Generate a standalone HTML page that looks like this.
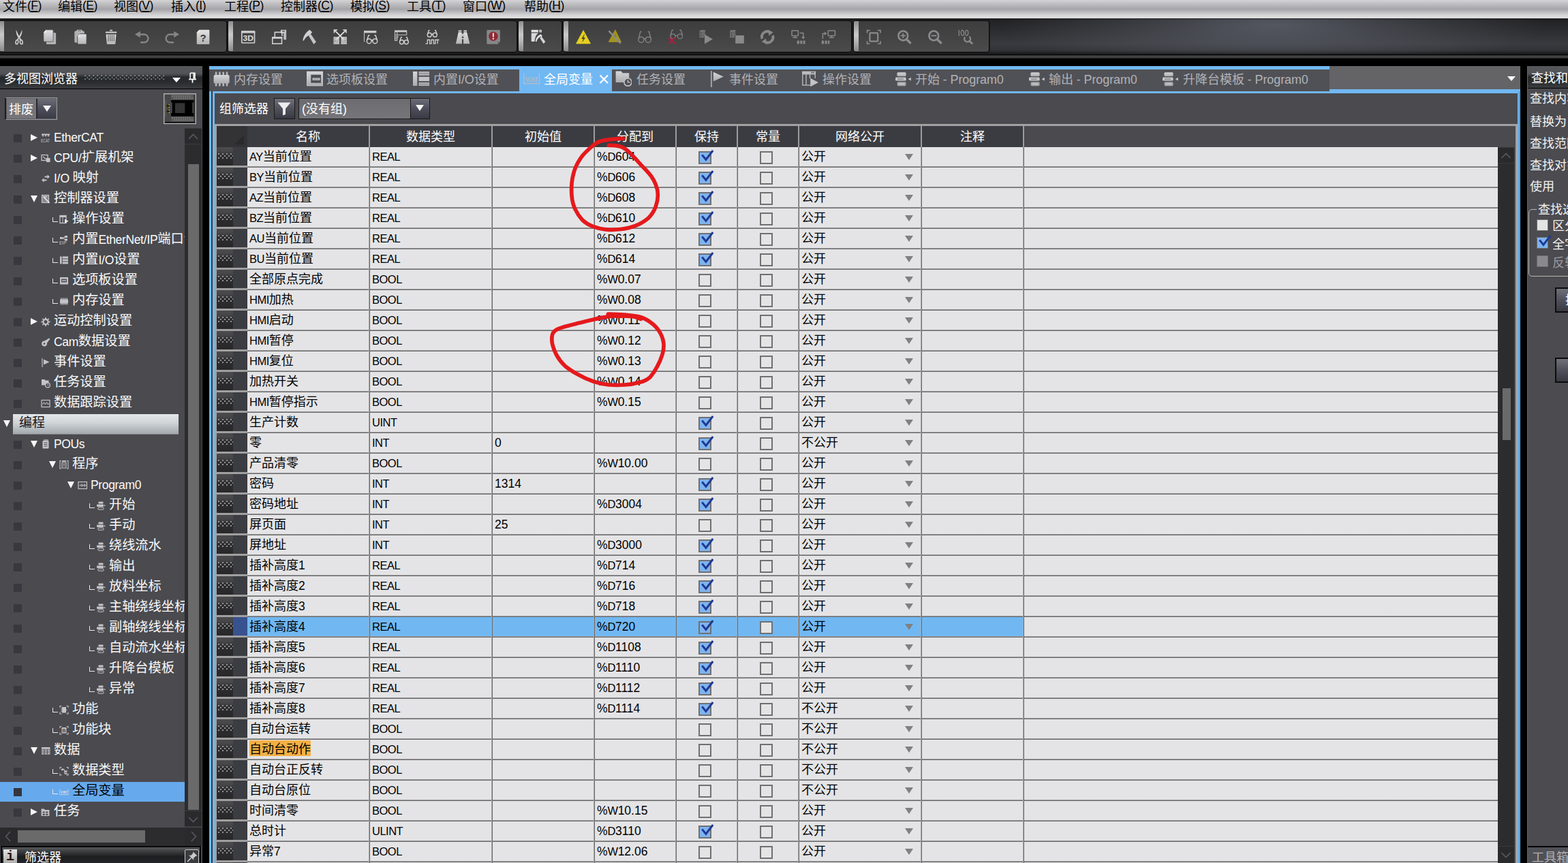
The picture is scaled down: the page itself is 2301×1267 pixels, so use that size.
<!DOCTYPE html><html lang="zh"><head><meta charset="utf-8"><title>Sysmac Studio</title><style>
*{box-sizing:border-box;margin:0;padding:0}
html,body{width:2301px;height:1267px;overflow:hidden;background:#000}
body{position:relative;font-family:"Liberation Sans","Noto Sans CJK SC",sans-serif;font-size:18px;color:#fff;white-space:nowrap}
div,span,svg{position:absolute}
span{position:static}
.l{font-size:16.5px;letter-spacing:-.5px}
.l2{font-size:18px;letter-spacing:-.1px}
.n{font-size:17.5px}
/* menu */
#menu{left:0;top:0;width:2301px;height:27px;background:linear-gradient(#d4d4d6 0,#bebec1 22%,#a5a5a9 50%,#c6c6c9 72%,#dededf 90%,#d8d8da 100%);color:#000;font-size:18px;overflow:hidden}
.mi{top:-3px;height:26px;line-height:26px}
.ml{font-size:17.5px;letter-spacing:-.5px;position:relative;top:-2px}
.ml u{text-decoration-thickness:1.5px;text-underline-offset:2px}
/* toolbar */
#tb{left:0;top:27px;width:2301px;height:54px;background:linear-gradient(#1c1c1e 0,#242426 10%,#2d2e31 38%,#393a3f 68%,#333438 86%,#1c1c1e 96%,#050505 100%);overflow:hidden}
#tbshine{left:1300px;top:1px;width:1001px;height:51px;background:radial-gradient(ellipse 400px 70px at 570px 8px,rgba(112,117,130,.62),rgba(112,117,130,.25) 55%,rgba(112,117,130,0) 100%)}
.tg{top:3px;height:47px;border:1.5px solid #0c0c0c;border-radius:4px;background:linear-gradient(#3e3e3f,#434344 50%,#4b4b4c);box-shadow:0 0 0 1px #1b1b1c}
.grip{left:0;top:0;width:7px;height:44px;border-radius:2px 0 0 2px;background:linear-gradient(#8e8e8f,#c9c9ca 45%,#bdbdbe 60%,#8a8a8b)}
#tbstrip{left:0;top:81px;width:2301px;height:5px;background:linear-gradient(#2a2b2c,#46484a 45%,#3a3c3e 70%,#141414)}
/* left panel */
#lp{left:0;top:97px;width:297px;height:1170px;background:#4a4a4f;overflow:hidden}
#lph{left:0;top:0;width:297px;height:33.5px;background:linear-gradient(#56575a 0,#525356 34%,#3c3e41 42%,#26292b 50%,#292c2e 70%,#3a3c3e 100%);border-bottom:1.5px solid #000}
#lph .t{position:absolute;left:6px;top:4.5px;line-height:28px;font-size:18px}
.dots{left:124px;top:12.6px;width:117px;height:7.6px;background-image:radial-gradient(circle at 1px 1px,#a0a2a4 0.5px,transparent 1.25px),radial-gradient(circle at 4.04px 4px,#a0a2a4 0.5px,transparent 1.25px);background-size:6.08px 5.4px}
#combo1{left:7px;top:46px;width:77px;height:33px;background:#75757b;border:1px solid #99999d;border-left:2px solid #1d1d1f;box-shadow:inset 0 0 0 1px #5e5e63}
#combo1 span{position:absolute;left:4px;top:2.5px;line-height:29px}
.cb{right:1px;top:1px;bottom:1px;width:29px;background:linear-gradient(#6c6d78,#4d4e59 50%,#393a44);border-left:2px solid #2a2a2e}
.cb i{position:absolute;left:8px;top:10px;border:6px solid transparent;border-top:9px solid #f4f4f4;border-bottom:0}
#tree{left:0;top:0;width:271px;height:1118px;overflow:hidden}
.ck{left:20px;width:12px;height:12px;background:#38383e}
.ck.s{background:#343540}
.tt{height:30px;line-height:28px;color:#fafafa;font-size:19.2px}
.tt.s{color:#000}
.tt .l{font-size:17.5px;letter-spacing:-.35px}
.trsel{left:0;width:271px;height:29px;background:#66a9ec}
.trh{left:19px;width:243px;height:30px;background:linear-gradient(#e4e7ea,#cfd3d7 45%,#b3b8bd 80%,#a3a8ad);color:#16161a;border-bottom:1px solid #7d8186}
.trh span{position:absolute;left:9px;top:-1px;line-height:28px;font-size:19px}
.ar{border:5.5px solid transparent;border-left:10px solid #f6f6f6;border-right:0;width:0;height:0}
.ad{border:5.5px solid transparent;border-top:10px solid #f6f6f6;border-bottom:0;width:0;height:0}
.adw{border:6px solid transparent;border-top:7px solid #fff;border-bottom:0;width:0;height:0}
.el{width:8px;height:7px;border-left:1.5px solid #e8e8e8;border-bottom:1.5px solid #e8e8e8}
#lvs{left:271px;top:91px;width:25px;height:1026px;background:#2c2c2f}
.sbtn{left:0;width:100%;height:24px;background:#2a2a2d;border-bottom:1px solid #3a3a3d;border-top:1px solid #3a3a3d}
#lvs .thumb{left:5px;top:53px;width:16px;height:948px;background:#6a6a6b}
#lhs{left:0;top:1118px;width:296px;height:27px;background:#2c2c2f}
.hb{top:0;width:25px;height:27px;background:#2a2a2d}
#lhs .thumb{left:26px;top:4px;width:187px;height:18px;background:#6a6a6b}
#lpf{left:1px;top:1145px;width:294px;height:27px;background:linear-gradient(#57595b 0,#3e4042 22%,#1b1d1f 55%,#25272a 100%);border:2px solid #080808;border-bottom:0}
#lpf span{position:absolute;left:33px;top:2.5px;font-size:18px;line-height:24px}
.ibox{left:2px;top:3px;width:20px;height:22px;background:linear-gradient(#e6e6e6,#a8a8a8);color:#111;font:bold 20px "Liberation Mono",monospace;text-align:center;line-height:21px;color:#2a1812}
.pbox{left:268px;top:3px;width:21px;height:22px;border:1px solid #c9c9c9;border-radius:2px;background:#3b3c3e}
/* tabs */
#tabs{left:0;top:0;width:2301px;height:140px;pointer-events:none}
#tabtop{left:307px;top:97px;width:1644px;height:6px;background:#71b8f3}
#tabbg{left:307px;top:102px;width:1644px;height:32px;background:#505156}
#tabrest{left:1951px;top:97px;width:280px;height:34px;background:#646466}
#tabline{left:307px;top:134px;width:1924px;height:3px;background:#71b8f3}
#tabline:after{content:"";position:absolute;left:1644px;top:-3px;width:280px;height:3px;background:#71b8f3}
#tabact{left:762px;top:97px;width:136px;height:40px;background:#71b8f3}
.tab{top:102px;height:31px;line-height:31px;color:#b2b2b6;font-size:18px}
.tab.a{color:#fff}
/* content */
#cbl1{left:307px;top:134px;width:3px;height:1133px;background:#71b8f3}
#cbl2{left:312px;top:134px;width:3px;height:1133px;background:#71b8f3}
#cbr1{left:2227px;top:134px;width:4px;height:1133px;background:linear-gradient(to right,#71b8f3 0,#71b8f3 48%,#4d82b8 48%,#4d82b8 66%,#71b8f3 66%,#71b8f3 100%)}
#cbr2{display:none}
#content{left:315px;top:137px;width:1912px;height:1130px;background:#4a4a4f;overflow:hidden}
body>#cgap{left:310px;top:134px;width:2px;height:1133px;background:#3a3a3e}
.lbl{line-height:31px;font-size:18px}
.fbtn{width:31px;height:31px;border:1.5px solid #1a1a1c;background:linear-gradient(#6f7079,#50515b 50%,#383942)}
#combo2{left:123px;top:7px;width:193px;height:31px;background:linear-gradient(#6b6b70,#75757a);border:1.5px solid #1a1a1c}
#combo2 span{position:absolute;left:4px;top:1px;line-height:28px;font-size:18px}
#combo2 .l{font-size:18px;letter-spacing:0}
#combo2 .cb{right:0;top:0;bottom:0;width:28px;border-left:1.5px solid #1a1a1c}
#combo2 .cb i{left:7px;top:9px}
/* grid */
#grid{left:0;top:45px;width:1912px;height:1085px;border-top:3px solid #a2a2a2;border-left:3px solid #a2a2a2;border-right:3px solid #a2a2a2;overflow:hidden}
#gh{left:0;top:0;width:1906px;height:31px;background:#4a4a4f;z-index:2}
.corner{left:0;top:0;width:45px;height:31px;background:#333335}
.corner i{position:absolute;right:5px;bottom:4px;border:7px solid transparent;border-right-color:#2a2a2c;border-bottom-color:#2a2a2c}
.hc{top:0;height:31px;background:#3b3c42;text-align:center;line-height:33px;font-size:18px;color:#fff}
.hs{top:0;width:2px;height:31px;background:#9c9c9c}
.row{left:0;width:1880px;height:30px}
.rh{left:0;top:0;width:45px;height:30px;background:linear-gradient(#3c3d42,#3c3d42) 0 0/100% 27px no-repeat,#a0a0a0}
.rh i{position:absolute;left:0;top:0;width:24px;height:27px;background:linear-gradient(#4b4b4d 0,#474749 22%,#2e2e30 48%,#282829 100%);}
.rh i:after{content:"";position:absolute;left:1.6px;top:9px;width:22px;height:9px;background-image:radial-gradient(circle at 1px 1px,#a2a2a2 0.6px,transparent 1.4px),radial-gradient(circle at 4px 4px,#a2a2a2 0.6px,transparent 1.4px);background-size:6px 6px}
.c{top:0;height:28px;line-height:29px;background:#e4e4e6;color:#000;font-size:18px;overflow:hidden;padding-left:3px}
.row{background:linear-gradient(#a2a2a4,#a2a2a4) 0 28px/100% .8px no-repeat,#6b6b6b}
.c1{left:45px;width:178px}.c2{left:225px;width:178px}.c3{left:405px;width:148px}.c4{left:555px;width:118px}.c5{left:675px;width:88px}.c6{left:765px;width:88px}.c7{left:855px;width:178px}.c8{left:1035px;width:148px}.c9{left:1185px;width:695px}
.row.sel .c{background:#71b8f3}
.row.sel .c9{background:#e4e4e6}
.row.sel .rh{background:linear-gradient(#38518f,#38518f) 0 0/100% 27px no-repeat,#a0a0a0}
.vl{top:31px;width:2px;height:1060px;background:linear-gradient(to right,#a6a6a8 0,#a6a6a8 32%,#6b6b6b 32%,#6b6b6b 100%)}
.hl{position:absolute;left:2.6px;top:1px;width:90px;height:23.4px;background:#f4b044}
.hl+span{position:relative}
.chk{left:32px;top:6px;width:19px;height:19px;border:2px solid #707072;background:#e4e4e4}
.chk.on{background:#7fb3ee;overflow:visible}

.c5,.c6{overflow:visible}
.c7 b{position:absolute;left:155px;top:10px;border:6.5px solid transparent;border-top:9px solid #808082;border-bottom:0}
#gvs{left:1880px;top:31px;width:24px;height:1051px;background:#2c2c2f}
#gvs .thumb{left:7px;top:354px;width:12px;height:76px;background:#6a6a6b}
/* red */
#red{left:0;top:0;z-index:5;pointer-events:none}
/* right panel */
#rp{left:2241px;top:97px;width:60px;height:1170px;background:#4b4b50;overflow:hidden;border-left:1px solid #66666a}
#rph{left:0;top:0;width:60px;height:33px;background:linear-gradient(#56575a 0,#525356 34%,#3c3e41 42%,#26292b 50%,#292c2e 70%,#3a3c3e 100%);border-bottom:1.5px solid #000}
#rph span{position:absolute;left:5px;top:3.5px;line-height:28px;font-size:18px}
.rl{left:3px;line-height:25px;font-size:18px;color:#f2f2f2}
#rgb{left:1px;top:210px;width:80px;height:99px;border:1.5px solid #b9b9a9;border-radius:5px}
.rchk{left:13px;width:17px;height:17px;border:1px solid #707072}

.rbtn{left:40px;width:40px;height:37px;border:2px solid #0c0c0e;background:linear-gradient(#6f7079,#50515b 50%,#383942)}
#rpf{left:0;top:1145px;width:60px;height:25px;background:#505156;border-top:2px solid #000}
#rpf span{position:absolute;left:6px;top:4px;color:#b0b0b4;font-size:18px;line-height:22px}

.rbtn span{position:absolute;left:13px;top:5px;font-size:18px;line-height:24px;color:#fff}

.tt .l,.tt .n{position:relative;top:.5px}
.c .l,.c .n{position:relative;top:-.5px}

</style></head><body>
<div id="menu">
<div class="mi" style="left:4px">文件<span class="ml">(<u>F</u>)</span></div>
<div class="mi" style="left:85px">编辑<span class="ml">(<u>E</u>)</span></div>
<div class="mi" style="left:167px">视图<span class="ml">(<u>V</u>)</span></div>
<div class="mi" style="left:251px">插入<span class="ml">(<u>I</u>)</span></div>
<div class="mi" style="left:329px">工程<span class="ml">(<u>P</u>)</span></div>
<div class="mi" style="left:412px">控制器<span class="ml">(<u>C</u>)</span></div>
<div class="mi" style="left:514px">模拟<span class="ml">(<u>S</u>)</span></div>
<div class="mi" style="left:597px">工具<span class="ml">(<u>T</u>)</span></div>
<div class="mi" style="left:679px">窗口<span class="ml">(<u>W</u>)</span></div>
<div class="mi" style="left:769px">帮助<span class="ml">(<u>H</u>)</span></div>
</div>
<div id="tb"><div id="tbshine"></div>
<div class="tg" style="left:-2px;width:335px"><div class="grip"></div></div>
<div class="tg" style="left:334px;width:425px"><div class="grip"></div></div>
<div class="tg" style="left:760px;width:65px"><div class="grip"></div></div>
<div class="tg" style="left:826px;width:424px"><div class="grip"></div></div>
<div class="tg" style="left:1252px;width:200px"><div class="grip"></div></div>
<svg width="0" height="0" style="left:0;top:0"><defs><linearGradient id="g1" x1="0" y1="0" x2="0" y2="1"><stop offset="0" stop-color="#e2e2e4"/><stop offset="1" stop-color="#b4b4b6"/></linearGradient><linearGradient id="g2" x1="0" y1="0" x2="0" y2="1"><stop offset="0" stop-color="#9a9a9c"/><stop offset="1" stop-color="#707072"/></linearGradient></defs></svg><svg style="left:16px;top:15px" width="24" height="24" viewBox="0 0 24 24"><g fill="none" stroke="#d6d6d8" stroke-width="1.5"><ellipse cx="8.9" cy="19.8" rx="1.8" ry="3" transform="rotate(12 8.9 19.8)"/><ellipse cx="15.3" cy="19.8" rx="1.8" ry="3" transform="rotate(-12 15.3 19.8)"/></g><path d="M7.7 1.8 C7.2 5.5 8.6 10 11 13.6 L14 17.6 L15.6 16.6 L12.9 12.6 C10.6 8.6 9 5 7.7 1.8Z" fill="#dadadc"/><path d="M16.4 1.8 C16.9 5.5 15.5 10 13.1 13.6 L10.1 17.6 L8.5 16.6 L11.2 12.6 C13.5 8.6 15.1 5 16.4 1.8Z" fill="#d0d0d2"/><circle cx="12.05" cy="14.3" r=".8" fill="#88888a"/></svg><svg style="left:61px;top:15px" width="24" height="24" viewBox="0 0 24 24"><path d="M8.4 6.1 h11.2 a1.5 1.5 0 0 1 1.5 1.5 v14 a1.5 1.5 0 0 1 -1.5 1.5 h-11.2 a1.5 1.5 0 0 1 -1.5 -1.5 v-14 a1.5 1.5 0 0 1 1.5 -1.5z" fill="#b2b2b4"/><path d="M6.6 1.8 h9 a1.5 1.5 0 0 1 1.5 1.5 v14.4 a1.5 1.5 0 0 1 -1.5 1.5 h-11.2 a1.5 1.5 0 0 1 -1.5 -1.5 v-12z" fill="url(#g1)" stroke="#48484a" stroke-width=".7"/><path d="M2.9 5.7 L6.6 1.8 v3.9z" fill="#f6f6f6"/></svg><svg style="left:106px;top:15px" width="24" height="24" viewBox="0 0 24 24"><path d="M4.8 3.4 h11.6 a1.5 1.5 0 0 1 1.5 1.5 v14 a1.5 1.5 0 0 1 -1.5 1.5 h-11.6 a1.5 1.5 0 0 1 -1.5 -1.5 v-14 a1.5 1.5 0 0 1 1.5 -1.5z" fill="#b0b0b2"/><path d="M7 1.8 h7.2 l.9 2.9 h-9z" fill="#cacacc"/><rect x="8" y="2.7" width="5.2" height="1.1" fill="#5a5a5c"/><path d="M11.4 7.7 h8.2 a1.5 1.5 0 0 1 1.5 1.5 v12.4 a1.5 1.5 0 0 1 -1.5 1.5 h-10.4 a1.5 1.5 0 0 1 -1.5 -1.5 v-10z" fill="url(#g1)" stroke="#434345" stroke-width=".9"/><path d="M7.7 11.6 L11.4 7.7 v3.9z" fill="#f6f6f6"/></svg><svg style="left:151px;top:15px" width="24" height="24" viewBox="0 0 24 24"><rect x="10.1" y="1.8" width="3.9" height="1.6" rx=".5" fill="#d2d2d4"/><rect x="3.9" y="4.6" width="16.4" height="1.9" rx=".6" fill="#d6d6d8"/><path d="M4.6 8.5 h14.9 l-1.1 13.3 a1.3 1.3 0 0 1 -1.3 1.2 h-10.1 a1.3 1.3 0 0 1 -1.3 -1.2z" fill="url(#g1)"/><g stroke="#4a4a4c" stroke-width="1.05"><path d="M7.9 9 v9.6 M10.7 9 v9.6 M13.4 9 v9.6 M16.2 9 v9.6"/></g></svg><svg style="left:196px;top:15px" width="24" height="24" viewBox="0 0 24 24"><path d="M9.7 8.5 H15.5 A5.9 5.9 0 0 1 15.5 20.3 H10.1" fill="none" stroke="#858587" stroke-width="2.4"/><path d="M1.9 8.5 L9.9 3.8 V13.2 Z" fill="#858587"/></svg><svg style="left:241px;top:15px" width="24" height="24" viewBox="0 0 24 24"><path d="M14.3 8.5 H8.5 A5.9 5.9 0 0 0 8.5 20.3 H13.9" fill="none" stroke="#858587" stroke-width="2.4"/><path d="M22.1 8.5 L14.1 3.8 V13.2 Z" fill="#858587"/></svg><svg style="left:286px;top:15px" width="24" height="24" viewBox="0 0 24 24"><path d="M6.6 1.8 h13.6 a1.2 1.2 0 0 1 1.2 1.2 v18.8 a1.2 1.2 0 0 1 -1.2 1.2 h-16.3 a1.2 1.2 0 0 1 -1.2 -1.2 v-16z" fill="url(#g1)"/><path d="M2.7 5.8 L6.6 1.8 v4z" fill="#f6f6f6"/><text x="12.1" y="19.2" font-family="Liberation Sans" font-weight="bold" font-size="15" text-anchor="middle" fill="#3a3a3c">?</text></svg><svg style="left:352px;top:15px" width="24" height="24" viewBox="0 0 24 24"><rect x="2.8" y="4.2" width="18.7" height="16.8" rx=".8" fill="none" stroke="#cdcdcf" stroke-width="1.7"/><rect x="2" y="3.4" width="20.3" height="3.2" fill="#cdcdcf"/><text x="12.2" y="17.6" font-family="Liberation Sans" font-weight="bold" font-size="11.5" text-anchor="middle" fill="#dededf" textLength="15.5" lengthAdjust="spacingAndGlyphs">3D</text></svg><svg style="left:397px;top:15px" width="24" height="24" viewBox="0 0 24 24"><rect x="14.9" y="1.8" width="8.2" height="5.1" fill="#c8c8ca"/><rect x="17.2" y="3" width="3.6" height="1.6" fill="#58585a"/><rect x="19.2" y="6.9" width="3.9" height="9.4" fill="#bcbcbe"/><path d="M6.3 12 V5.4 H16.9 V11" fill="none" stroke="#cfcfd1" stroke-width="1.6"/><rect x="2.8" y="12.8" width="13.7" height="9.4" fill="none" stroke="#cfcfd1" stroke-width="1.6"/><rect x="2" y="12" width="15.3" height="2.8" fill="#cfcfd1"/></svg><svg style="left:442px;top:15px" width="24" height="24" viewBox="0 0 24 24"><path d="M2.4 17.8 C3 11 7 5 12.5 1.8 L16.1 5.3 L12.8 9.4 C9 10.2 6 13 3.9 17.4 Z" fill="#d0d0d2"/><path d="M11 10.8 L14.1 8.1 L21.9 19.4 L18.4 23 Z" fill="#c4c4c6"/></svg><svg style="left:487px;top:15px" width="24" height="24" viewBox="0 0 24 24"><rect x="2.4" y="12" width="8.6" height="11" fill="#b6b6b8"/><rect x="13.3" y="12" width="8.7" height="11" fill="#b6b6b8"/><g stroke="#e2e2e4" stroke-width="1.7" fill="none"><path d="M5.1 17.4 L20.6 2.4 M19.2 17.4 L3.8 2.4"/><path d="M3.4 6.6 V2 H8 M16.4 2 H21 V6.6" stroke-width="1.5"/></g><g stroke="#4a4a4c" stroke-width=".7" fill="none"><path d="M4 18.6 L6.6 16 M20.3 18.6 L17.7 16"/></g></svg><svg style="left:532px;top:15px" width="24" height="24" viewBox="0 0 24 24"><path d="M2.5 19.5 V4" fill="none" stroke="#bfbfc1" stroke-width="1.1"/><rect x="2" y="3" width="18.3" height="3.4" fill="#cacacc"/><g fill="none" stroke="#d0d0d2" stroke-width="1.5"><circle cx="9.7" cy="18.4" r="3.4"/><circle cx="18.3" cy="18.4" r="3.4"/><path d="M13 17.4 q1 -1.2 2 0 M6.6 16.8 L8.8 10 h1.8 M21.4 16.8 L19.2 10 h-1.8"/></g></svg><svg style="left:577px;top:15px" width="24" height="24" viewBox="0 0 24 24"><rect x="2" y="2.4" width="18.2" height="2.8" fill="#cacacc"/><g fill="none" stroke="#c2c2c4" stroke-width="1.1"><path d="M2.5 5 V17.4 H6 M2.5 9.2 H20.2 M2.5 12.2 H8 M2.5 14.8 H6 M5.8 5 V17.4 M19.7 5 V9.6"/></g><g fill="none" stroke="#d0d0d2" stroke-width="1.4"><circle cx="12.5" cy="19.8" r="3"/><circle cx="19.3" cy="19.8" r="3"/><path d="M15.4 19 q.5 -1 1 0 M9.8 18.4 L11.6 12.8 h1.4 M22 18.4 L20.2 12.8 h-1.4"/></g></svg><svg style="left:622px;top:15px" width="24" height="24" viewBox="0 0 24 24"><g fill="none" stroke="#d0d0d2" stroke-width="1.4"><circle cx="8.2" cy="9.3" r="3"/><circle cx="16.3" cy="9.3" r="3"/><path d="M11.2 8.6 q1 -1.1 2 0 M5.5 7.8 L7.2 2.8 h1.5 M19 7.8 L17.3 2.8 h-1.5"/><path d="M2.4 22.2 H5.3 V16.5 H8.6 V22.2 H11 V16.5 H14.4 V22.2 H16.8 V16.5 H20.1 V22.2 M20.1 16.5 H22.5" stroke-width="1.3"/></g></svg><svg style="left:667px;top:15px" width="24" height="24" viewBox="0 0 24 24"><path d="M5.7 2.6 h4.8 v1.9 h-4.8z M13.3 2.6 h4.8 v1.9 h-4.8z" fill="#d4d4d6"/><path d="M5.7 5.2 h4.8 L11 22.2 H1.9 Z M13.3 5.2 h4.8 L22.4 22.2 H13 Z" fill="url(#g1)"/><rect x="9.5" y="7.4" width="5.3" height="8.1" fill="#c8c8ca"/><circle cx="12.1" cy="12.8" r="1.3" fill="#3e3e40"/></svg><svg style="left:712px;top:15px" width="24" height="24" viewBox="0 0 24 24"><path d="M3.6 2.1 h17 a1.3 1.3 0 0 1 1.3 1.3 v15.1 l-4.2 4.2 h-14.1 a1.3 1.3 0 0 1 -1.3 -1.3 v-18 a1.3 1.3 0 0 1 1.3 -1.3z" fill="#868688"/><path d="M17.7 22.7 v-4.2 h4.2z" fill="#5e5e60" stroke="#a2a2a4" stroke-width=".6"/><circle cx="11.9" cy="11.2" r="6.7" fill="#8e2932"/><rect x="10.8" y="6.2" width="2.2" height="6.4" rx="1" fill="#dcdcde"/><circle cx="11.9" cy="14.8" r="1.3" fill="#dcdcde"/></svg><svg style="left:778px;top:15px" width="24" height="24" viewBox="0 0 24 24"><rect x="1.7" y="1.8" width="10.2" height="3.6" fill="#e2e2e4"/><rect x="13.3" y="1.8" width="3.6" height="3.6" fill="#e2e2e4"/><rect x="14.6" y="3" width="1.1" height="1.2" fill="#4a4a4c"/><path d="M1.7 6.6 H12.5 C9 8.5 7.2 12 6.6 18.9 H1.7 Z" fill="#d8d8da"/><path d="M7.8 18.9 C8.2 13.5 11 10 15.6 8.2 L17.9 10.6 L16.4 12.4 L15.6 11.6 C12.4 13.2 10.4 15.4 9.4 19.2 Z" fill="#e2e2e4"/><path d="M14.2 13.8 L16.6 11.6 L22.3 19.2 L19.6 22.3 Z" fill="#d6d6d8"/></svg><svg style="left:844px;top:15px" width="24" height="24" viewBox="0 0 24 24"><path d="M12 2.6 L22.5 22 H1.6 Z" fill="#e6d01f" stroke="#e6d01f" stroke-width=".8" stroke-linejoin="round"/><path d="M13.4 8.2 L9.2 15 h2.6 L10.2 20.6 L15 13.2 h-2.8 L13.9 8.2z" fill="#46432a"/></svg><svg style="left:889px;top:15px" width="24" height="24" viewBox="0 0 24 24"><path d="M13.8 1.8 L22.5 19.5 H4.2 Z" fill="#a39420" stroke="#a39420" stroke-width=".8" stroke-linejoin="round"/><path d="M14.4 6.5 L11.6 11.4 h2 L12.4 16 L16 10.2 h-2z" fill="#857a22"/><path d="M4.4 3.4 L21.6 21.8" stroke="#8c8c8e" stroke-width="2.3"/></svg><svg style="left:934px;top:15px" width="24" height="24" viewBox="0 0 24 24"><g fill="none" stroke="#808082" stroke-width="1.5"><circle cx="6.8999999999999995" cy="16.3" r="4.1"/><circle cx="17.3" cy="16.3" r="4.1"/><path d="M11.0 15.5 q1.1 -1.3 2.2 0 M3.1999999999999993 14.700000000000001 L5.699999999999999 4.500000000000001 h1.8 M21.0 14.700000000000001 L18.5 4.500000000000001 h-1.8"/></g></svg><svg style="left:979px;top:15px" width="24" height="24" viewBox="0 0 24 24"><g fill="none" stroke="#808082" stroke-width="1.4"><circle cx="8.5" cy="11.4" r="3.5"/><circle cx="18.9" cy="11.4" r="3.5"/><path d="M12.6 10.6 q1.1 -1.3 2.2 0 M4.799999999999999 9.8 L7.299999999999999 2.2 h1.8 M22.6 9.8 L20.1 2.2 h-1.8"/></g><path d="M2.6 13.2 L11.5 22.1 M11.5 13.2 L2.6 22.1" stroke="#a8203e" stroke-width="2.4"/></svg><svg style="left:1024px;top:15px" width="24" height="24" viewBox="0 0 24 24"><g fill="#7e7e80"><path d="M4.2 2.3 h6.6 v2.4 h-8.4 v-.8z"/><rect x="2.4" y="5.6" width="2.2" height="1.9"/><rect x="5.2" y="5.6" width="5.6" height="1.9"/><rect x="2.4" y="8.4" width="2.2" height="1.9"/><rect x="5.2" y="8.4" width="5.6" height="1.9"/><rect x="2.4" y="11.2" width="2.2" height="1.9"/><rect x="5.2" y="11.2" width="4" height="1.9"/></g><path d="M10 8.6 L21.9 15.6 L10 22.5 Z" fill="#8a8a8c"/></svg><svg style="left:1069px;top:15px" width="24" height="24" viewBox="0 0 24 24"><g fill="#7e7e80"><path d="M3.7 2.3 h6.6 v2.4 h-8.4 v-.8z"/><rect x="1.9" y="5.6" width="2.2" height="1.9"/><rect x="4.7" y="5.6" width="5.6" height="1.9"/><rect x="1.9" y="8.4" width="2.2" height="1.9"/><rect x="4.7" y="8.4" width="5.6" height="1.9"/><rect x="1.9" y="11.2" width="2.2" height="1.9"/><rect x="4.7" y="11.2" width="4" height="1.9"/></g><rect x="10.2" y="10" width="12.6" height="11.8" fill="#8a8a8c"/></svg><svg style="left:1114px;top:15px" width="24" height="24" viewBox="0 0 24 24"><g fill="none" stroke="#88888a" stroke-width="3.8"><path d="M4.4 14.8 A8 8 0 0 1 15.5 5"/><path d="M20 10 A8 8 0 0 1 8.9 19.8"/></g><path d="M13.2 1.8 L20.6 5.6 L14.4 10.4Z M11.2 23 L3.8 19.2 L10 14.4Z" fill="#88888a"/></svg><svg style="left:1159px;top:15px" width="24" height="24" viewBox="0 0 24 24"><g fill="none" stroke="#88888a" stroke-width="1.5"><rect x="3" y="3" width="9.4" height="7.4" rx=".6"/><path d="M7.7 10.4 v2.4 M4.4 13.3 h6.6"/><path d="M14.8 6.5 h4.9 v6"/></g><path d="M17 12 h5.4 l-2.7 3.4z" fill="#88888a"/><g fill="#88888a"><rect x="10.6" y="17.6" width="3.3" height="4.9"/><rect x="15.3" y="17.6" width="3" height="4.9"/><rect x="19.6" y="17.6" width="2.9" height="4.9"/></g></svg><svg style="left:1204px;top:15px" width="24" height="24" viewBox="0 0 24 24"><g fill="none" stroke="#88888a" stroke-width="1.5"><rect x="11.2" y="3" width="10.2" height="7.4" rx=".6"/><path d="M16.3 10.4 v2.4 M13 13.3 h6.6"/><path d="M3.4 15 v-7.8 h3"/></g><path d="M6 4.4 v5.6 l3.4 -2.8z" fill="#88888a"/><g fill="#88888a"><rect x="1.8" y="17.6" width="3.3" height="4.9"/><rect x="6.6" y="17.6" width="3" height="4.9"/><rect x="10.9" y="17.6" width="2.4" height="4.9"/></g></svg><svg style="left:1270px;top:15px" width="24" height="24" viewBox="0 0 24 24"><g fill="none" stroke="#8a8a8c"><rect x="6.4" y="6.4" width="11.8" height="12.3" rx="1" stroke-width="2.2"/><path d="M2.5 6.6 V2.6 H6.6 M18 2.6 H22.1 V6.6 M22.1 18.2 V22.2 H18 M6.6 22.2 H2.5 V18.2" stroke-width="1.6"/></g></svg><svg style="left:1315px;top:15px" width="24" height="24" viewBox="0 0 24 24"><circle cx="10.3" cy="10.4" r="6.9" fill="none" stroke="#8a8a8c" stroke-width="2.7"/><path d="M15.6 16 L20.6 20.8" stroke="#8a8a8c" stroke-width="3.6" stroke-linecap="round"/><path d="M6.6 10.4 h7.4" stroke="#8a8a8c" stroke-width="1.9"/><path d="M10.3 6.7 v7.4" stroke="#8a8a8c" stroke-width="1.9"/></svg><svg style="left:1360px;top:15px" width="24" height="24" viewBox="0 0 24 24"><circle cx="10.3" cy="10.4" r="6.9" fill="none" stroke="#8a8a8c" stroke-width="2.7"/><path d="M15.6 16 L20.6 20.8" stroke="#8a8a8c" stroke-width="3.6" stroke-linecap="round"/><path d="M6.6 10.4 h7.4" stroke="#8a8a8c" stroke-width="1.9"/></svg><svg style="left:1405px;top:15px" width="24" height="24" viewBox="0 0 24 24"><g fill="none" stroke="#8a8a8c" stroke-width="1.3"><path d="M2.3 2 v8.8"/><ellipse cx="7.4" cy="6.3" rx="2.1" ry="3.9"/><ellipse cx="13.7" cy="6.3" rx="2.1" ry="3.9"/><path d="M17.4 11.6 A4.4 4.4 0 1 1 11.2 12.2" stroke-width="2.3"/></g><path d="M17.6 18.4 L21.4 21.6" stroke="#8a8a8c" stroke-width="2.8" stroke-linecap="round"/></svg>
</div>
<div id="tbstrip"></div>
<div id="lp">
<div id="lph"><span class="t">多视图浏览器</span><div class="dots"></div><div class="adw" style="left:253px;top:17px"></div><svg style="left:276px;top:7.5px" width="14" height="20" viewBox="0 0 14 20"><path d="M3.2 2.3 H10 V10.6 M3.2 2.3 V10.6" stroke="#fff" stroke-width="1.5" fill="none"/><path d="M8.6 2.3 V10.6" stroke="#fff" stroke-width="2.2"/><path d="M1 11.4 h11" stroke="#fff" stroke-width="1.8"/><path d="M6.5 12 v4.6" stroke="#fff" stroke-width="1.8"/></svg></div>
<div id="combo1"><span>排废</span><div class="cb"><i></i></div></div>
<svg style="left:240px;top:40px" width="48" height="46" viewBox="0 0 48 46"><rect x=".8" y=".8" width="46.4" height="43.6" fill="#2c2c2c" stroke="#bcbcbc" stroke-width="1.4"/><rect x="1.8" y="2" width="9.4" height="40" fill="#474747"/><rect x="1.8" y="9" width="1.6" height="26" fill="#5e5e5e"/><rect x="11" y="2" width="33.6" height="7.6" fill="#5a5a5a"/><rect x="11" y="34.2" width="33.6" height="7.6" fill="#5a5a5a"/><rect x="11" y="10" width="33.2" height="23.5" fill="#000"/><rect x="11" y="13.4" width="1.7" height="15.6" fill="#4a4a4a"/><rect x="42.3" y="13.4" width="1.9" height="15.6" fill="#4a4a4a"/><rect x="16.9" y="14.3" width="14.4" height="14.7" fill="#343434"/><rect x="1.8" y="42" width="44.6" height="1.4" fill="#000"/><g fill="#8e8e8e"><rect x="12.4" y="3.4" width="1.3" height="1.5"/><rect x="15.6" y="6.4" width="1.3" height="1.5"/><rect x="12.4" y="35.2" width="1.3" height="1.5"/><rect x="15.6" y="38.4" width="1.3" height="1.5"/><rect x="15.6" y="3.4" width="1.3" height="1.5"/><rect x="18.8" y="6.4" width="1.3" height="1.5"/><rect x="15.6" y="35.2" width="1.3" height="1.5"/><rect x="18.8" y="38.4" width="1.3" height="1.5"/><rect x="18.8" y="3.4" width="1.3" height="1.5"/><rect x="22.0" y="6.4" width="1.3" height="1.5"/><rect x="18.8" y="35.2" width="1.3" height="1.5"/><rect x="22.0" y="38.4" width="1.3" height="1.5"/><rect x="22.0" y="3.4" width="1.3" height="1.5"/><rect x="25.2" y="6.4" width="1.3" height="1.5"/><rect x="22.0" y="35.2" width="1.3" height="1.5"/><rect x="25.2" y="38.4" width="1.3" height="1.5"/><rect x="25.2" y="3.4" width="1.3" height="1.5"/><rect x="28.4" y="6.4" width="1.3" height="1.5"/><rect x="25.2" y="35.2" width="1.3" height="1.5"/><rect x="28.4" y="38.4" width="1.3" height="1.5"/><rect x="28.4" y="3.4" width="1.3" height="1.5"/><rect x="31.6" y="6.4" width="1.3" height="1.5"/><rect x="28.4" y="35.2" width="1.3" height="1.5"/><rect x="31.6" y="38.4" width="1.3" height="1.5"/><rect x="31.6" y="3.4" width="1.3" height="1.5"/><rect x="34.8" y="6.4" width="1.3" height="1.5"/><rect x="31.6" y="35.2" width="1.3" height="1.5"/><rect x="34.8" y="38.4" width="1.3" height="1.5"/><rect x="34.8" y="3.4" width="1.3" height="1.5"/><rect x="38.0" y="6.4" width="1.3" height="1.5"/><rect x="34.8" y="35.2" width="1.3" height="1.5"/><rect x="38.0" y="38.4" width="1.3" height="1.5"/><rect x="38.0" y="3.4" width="1.3" height="1.5"/><rect x="41.2" y="6.4" width="1.3" height="1.5"/><rect x="38.0" y="35.2" width="1.3" height="1.5"/><rect x="41.2" y="38.4" width="1.3" height="1.5"/></g><path d="M4.6 18.4 h4.4 M6.9 16.2 v4.6 M4.6 26.4 h4.4 M6.9 24.2 v4.6" stroke="#111" stroke-width="1.3"/><g fill="#c8b21a"><rect x="7.4" y="16" width="1.5" height="1.5"/><rect x="7.4" y="19.6" width="1.5" height="1.5"/><rect x="7.4" y="23.8" width="1.5" height="1.5"/><rect x="7.4" y="27.4" width="1.5" height="1.5"/></g></svg>
<div id="tree">
<div class="ck" style="top:100px"></div>
<div class="ar" style="left:45px;top:100px"></div>
<svg style="left:60px;top:98px" width="14" height="15" viewBox="0 0 14 15"><path d="M1 2.5 h12" stroke="#c4c4c8" stroke-width="2"/><path d="M3 3 v2.5 M7 3 v2.5 M11 3 v2.5" stroke="#c4c4c8" stroke-width="1.6"/><text x="0" y="14" font-family="Liberation Sans" font-size="7" fill="#c4c4c8" textLength="13" lengthAdjust="spacingAndGlyphs">ECAT</text></svg>
<div class="tt" style="left:79px;top:90px"><span class="l">EtherCAT</span></div>
<div class="ck" style="top:130px"></div>
<div class="ar" style="left:45px;top:130px"></div>
<svg style="left:60px;top:128px" width="14" height="15" viewBox="0 0 14 15"><rect x="1" y="2.5" width="9" height="8" fill="none" stroke="#c4c4c8" stroke-width="1.3"/><path d="M3 5 l5 4" stroke="#c4c4c8" stroke-width="1.2"/><rect x="8" y="7" width="5.5" height="6" fill="#c4c4c8"/></svg>
<div class="tt" style="left:79px;top:120px"><span class="l">CPU</span><span class="n">/</span>扩展机架</div>
<div class="ck" style="top:160px"></div>
<svg style="left:60px;top:158px" width="14" height="15" viewBox="0 0 14 15"><path d="M1 9.5 l3.5 -3 v2 h4 v2 h-4 v2z M13 4.5 l-3.5 -3 v2 h-4 v2 h4 v2z" fill="#c4c4c8"/></svg>
<div class="tt" style="left:79px;top:150px"><span class="l">I</span><span class="n">/</span><span class="l">O</span><span class="n"> </span>映射</div>
<div class="ck" style="top:190px"></div>
<div class="ad" style="left:45px;top:190px"></div>
<svg style="left:60px;top:188px" width="14" height="15" viewBox="0 0 14 15"><rect x="1.5" y="1.5" width="10" height="11" fill="#88888c" stroke="#c4c4c8" stroke-width="1.2"/><path d="M4 4 l8.5 9" stroke="#e8e8ea" stroke-width="1.8"/><path d="M3 4 h6" stroke="#e8e8ea" stroke-width="1.2"/></svg>
<div class="tt" style="left:79px;top:180px">控制器设置</div>
<div class="ck" style="top:220px"></div>
<div class="el" style="left:77px;top:222px"></div>
<svg style="left:87px;top:218px" width="14" height="15" viewBox="0 0 14 15"><rect x="1" y="1.5" width="9" height="11" fill="none" stroke="#c4c4c8" stroke-width="1.3"/><rect x="1" y="1.5" width="9" height="2.5" fill="#c4c4c8"/><path d="M5 4 v8" stroke="#c4c4c8"/><path d="M8 6.5 l5.5 3.2 l-5.5 3.2z" fill="#e8e8ea"/></svg>
<div class="tt" style="left:106px;top:210px">操作设置</div>
<div class="ck" style="top:250px"></div>
<div class="el" style="left:77px;top:252px"></div>
<svg style="left:87px;top:248px" width="14" height="15" viewBox="0 0 14 15"><g fill="#c4c4c8"><rect x="8" y="1" width="4" height="3"/><rect x="8" y="5.5" width="4" height="3"/><rect x="1" y="3" width="4" height="3"/></g><path d="M5 4.5 h3 M5 4.5 L8 2.5 M5 4.5 L8 7" stroke="#c4c4c8" stroke-width=".9"/><text x="0" y="14" font-family="Liberation Sans" font-size="6.5" fill="#c4c4c8">EIP</text></svg>
<div class="tt" style="left:106px;top:240px">内置<span class="l">EtherNet</span><span class="n">/</span><span class="l">IP</span>端口设置</div>
<div class="ck" style="top:280px"></div>
<div class="el" style="left:77px;top:282px"></div>
<svg style="left:87px;top:278px" width="14" height="15" viewBox="0 0 14 15"><rect x="1" y="1.5" width="2.6" height="11" fill="#c4c4c8"/><g fill="#c4c4c8"><rect x="4.6" y="1.5" width="8.4" height="3"/><rect x="4.6" y="5.5" width="8.4" height="3"/><rect x="4.6" y="9.5" width="8.4" height="3"/></g></svg>
<div class="tt" style="left:106px;top:270px">内置<span class="l">I</span><span class="n">/</span><span class="l">O</span>设置</div>
<div class="ck" style="top:310px"></div>
<div class="el" style="left:77px;top:312px"></div>
<svg style="left:87px;top:308px" width="14" height="15" viewBox="0 0 14 15"><rect x="1" y="2" width="12" height="10.5" fill="#c4c4c8"/><rect x="3" y="4.5" width="8" height="5" fill="#505054"/><rect x="4" y="6.3" width="6" height="1.4" fill="#c4c4c8"/></svg>
<div class="tt" style="left:106px;top:300px">选项板设置</div>
<div class="ck" style="top:340px"></div>
<div class="el" style="left:77px;top:342px"></div>
<svg style="left:87px;top:338px" width="14" height="15" viewBox="0 0 14 15"><rect x="1" y="4.5" width="12" height="6" rx="1" fill="#c4c4c8"/><path d="M2.8 2.5 v10 M5.6 2.5 v10 M8.4 2.5 v10 M11.2 2.5 v10" stroke="#c4c4c8" stroke-width="1.5"/></svg>
<div class="tt" style="left:106px;top:330px">内存设置</div>
<div class="ck" style="top:370px"></div>
<div class="ar" style="left:45px;top:370px"></div>
<svg style="left:60px;top:368px" width="14" height="15" viewBox="0 0 14 15"><circle cx="7" cy="7.5" r="3.6" fill="none" stroke="#c4c4c8" stroke-width="2.2"/><g stroke="#c4c4c8" stroke-width="1.8"><path d="M7 1 v2 M7 12 v2 M.5 7.5 h2 M11.5 7.5 h2 M2.4 2.9 l1.4 1.4 M10.2 10.7 l1.4 1.4 M2.4 12.1 l1.4 -1.4 M10.2 4.3 l1.4 -1.4"/></g></svg>
<div class="tt" style="left:79px;top:360px">运动控制设置</div>
<div class="ck" style="top:400px"></div>
<svg style="left:60px;top:398px" width="14" height="15" viewBox="0 0 14 15"><path d="M5.5 5.5 a4 4 0 1 0 3.5 3 L13.5 2.5 L12 1.5 Z" fill="#c4c4c8"/><circle cx="5" cy="9.5" r="1.3" fill="#4a4a4f"/></svg>
<div class="tt" style="left:79px;top:390px"><span class="l">Cam</span>数据设置</div>
<div class="ck" style="top:430px"></div>
<svg style="left:60px;top:428px" width="14" height="15" viewBox="0 0 14 15"><path d="M2 1 v13" stroke="#c4c4c8" stroke-width="1.2"/><path d="M4 2.5 L12.5 6.5 L4 10.5Z" fill="#c4c4c8"/></svg>
<div class="tt" style="left:79px;top:420px">事件设置</div>
<div class="ck" style="top:460px"></div>
<svg style="left:60px;top:458px" width="14" height="15" viewBox="0 0 14 15"><path d="M1 2 h4.5 l1 1.5 h5 v7 h-10.5z" fill="#c4c4c8"/><circle cx="10" cy="10.5" r="3.4" fill="#4a4a4f" stroke="#c4c4c8" stroke-width="1.2"/><path d="M10 8.6 v2 h1.6" stroke="#c4c4c8" stroke-width=".9" fill="none"/></svg>
<div class="tt" style="left:79px;top:450px">任务设置</div>
<div class="ck" style="top:490px"></div>
<svg style="left:60px;top:488px" width="14" height="15" viewBox="0 0 14 15"><rect x="1" y="2.5" width="12" height="10" fill="none" stroke="#c4c4c8" stroke-width="1.2"/><path d="M2.5 9 l2 -3.5 l2 3.5 l2 -3.5 l2 3.5 l1.2 -2" fill="none" stroke="#c4c4c8" stroke-width="1"/></svg>
<div class="tt" style="left:79px;top:480px">数据跟踪设置</div>
<div class="trh" style="top:511px"><span>编程</span></div>
<div class="ad" style="left:5px;top:520px"></div>
<div class="ck" style="top:550px"></div>
<div class="ad" style="left:45px;top:550px"></div>
<svg style="left:60px;top:548px" width="14" height="15" viewBox="0 0 14 15"><rect x="2.5" y="2" width="9" height="11.5" rx="1" fill="#c4c4c8"/><path d="M4 1 h7" stroke="#c4c4c8" stroke-width="1.2"/><path d="M4.5 5 h5 M4.5 7.5 h5 M4.5 10 h5" stroke="#505054" stroke-width="1"/></svg>
<div class="tt" style="left:79px;top:540px"><span class="l">POUs</span></div>
<div class="ck" style="top:580px"></div>
<div class="ad" style="left:72px;top:580px"></div>
<svg style="left:87px;top:578px" width="14" height="15" viewBox="0 0 14 15"><path d="M3 1.5 H1 V13 H3 M11 1.5 H13 V13 H11" fill="none" stroke="#c4c4c8" stroke-width="1.1"/><rect x="4" y="4" width="6" height="8" fill="none" stroke="#c4c4c8" stroke-width="1.1"/><path d="M5.5 6.5 h3 M5.5 8.8 h3" stroke="#c4c4c8" stroke-width="1"/><rect x="4" y="1" width="6" height="1.8" fill="#c4c4c8"/></svg>
<div class="tt" style="left:106px;top:570px">程序</div>
<div class="ck" style="top:610px"></div>
<div class="ad" style="left:99px;top:610px"></div>
<svg style="left:114px;top:608px" width="14" height="15" viewBox="0 0 14 15"><rect x="1" y="2.5" width="12.5" height="10" fill="none" stroke="#c4c4c8" stroke-width="1.2"/><path d="M2.5 7.5 h2 M5 5.5 v4 M6.5 5.5 v4 M7 7.5 h2 M9.5 5.5 v4 M11 5.5 v4 M11 7.5 h1.5" stroke="#c4c4c8" stroke-width=".9" fill="none"/></svg>
<div class="tt" style="left:133px;top:600px"><span class="l">Program</span><span class="n">0</span></div>
<div class="ck" style="top:640px"></div>
<div class="el" style="left:131px;top:642px"></div>
<svg style="left:141px;top:638px" width="14" height="15" viewBox="0 0 14 15"><rect x="3.5" y="1.5" width="7" height="3" rx=".8" fill="#c4c4c8"/><rect x="1" y="5.5" width="10" height="3.4" rx=".8" fill="#c4c4c8"/><rect x="3" y="10" width="8" height="3.2" rx=".8" fill="none" stroke="#c4c4c8" stroke-width="1"/><path d="M14 7.2 l-2.2 -1.4 v2.8z" fill="#c4c4c8"/></svg>
<div class="tt" style="left:160px;top:630px">开始</div>
<div class="ck" style="top:670px"></div>
<div class="el" style="left:131px;top:672px"></div>
<svg style="left:141px;top:668px" width="14" height="15" viewBox="0 0 14 15"><rect x="3.5" y="1.5" width="7" height="3" rx=".8" fill="#c4c4c8"/><rect x="1" y="5.5" width="10" height="3.4" rx=".8" fill="#c4c4c8"/><rect x="3" y="10" width="8" height="3.2" rx=".8" fill="none" stroke="#c4c4c8" stroke-width="1"/><path d="M14 7.2 l-2.2 -1.4 v2.8z" fill="#c4c4c8"/></svg>
<div class="tt" style="left:160px;top:660px">手动</div>
<div class="ck" style="top:700px"></div>
<div class="el" style="left:131px;top:702px"></div>
<svg style="left:141px;top:698px" width="14" height="15" viewBox="0 0 14 15"><rect x="3.5" y="1.5" width="7" height="3" rx=".8" fill="#c4c4c8"/><rect x="1" y="5.5" width="10" height="3.4" rx=".8" fill="#c4c4c8"/><rect x="3" y="10" width="8" height="3.2" rx=".8" fill="none" stroke="#c4c4c8" stroke-width="1"/><path d="M14 7.2 l-2.2 -1.4 v2.8z" fill="#c4c4c8"/></svg>
<div class="tt" style="left:160px;top:690px">绕线流水</div>
<div class="ck" style="top:730px"></div>
<div class="el" style="left:131px;top:732px"></div>
<svg style="left:141px;top:728px" width="14" height="15" viewBox="0 0 14 15"><rect x="3.5" y="1.5" width="7" height="3" rx=".8" fill="#c4c4c8"/><rect x="1" y="5.5" width="10" height="3.4" rx=".8" fill="#c4c4c8"/><rect x="3" y="10" width="8" height="3.2" rx=".8" fill="none" stroke="#c4c4c8" stroke-width="1"/><path d="M14 7.2 l-2.2 -1.4 v2.8z" fill="#c4c4c8"/></svg>
<div class="tt" style="left:160px;top:720px">输出</div>
<div class="ck" style="top:760px"></div>
<div class="el" style="left:131px;top:762px"></div>
<svg style="left:141px;top:758px" width="14" height="15" viewBox="0 0 14 15"><rect x="3.5" y="1.5" width="7" height="3" rx=".8" fill="#c4c4c8"/><rect x="1" y="5.5" width="10" height="3.4" rx=".8" fill="#c4c4c8"/><rect x="3" y="10" width="8" height="3.2" rx=".8" fill="none" stroke="#c4c4c8" stroke-width="1"/><path d="M14 7.2 l-2.2 -1.4 v2.8z" fill="#c4c4c8"/></svg>
<div class="tt" style="left:160px;top:750px">放料坐标</div>
<div class="ck" style="top:790px"></div>
<div class="el" style="left:131px;top:792px"></div>
<svg style="left:141px;top:788px" width="14" height="15" viewBox="0 0 14 15"><rect x="3.5" y="1.5" width="7" height="3" rx=".8" fill="#c4c4c8"/><rect x="1" y="5.5" width="10" height="3.4" rx=".8" fill="#c4c4c8"/><rect x="3" y="10" width="8" height="3.2" rx=".8" fill="none" stroke="#c4c4c8" stroke-width="1"/><path d="M14 7.2 l-2.2 -1.4 v2.8z" fill="#c4c4c8"/></svg>
<div class="tt" style="left:160px;top:780px">主轴绕线坐标</div>
<div class="ck" style="top:820px"></div>
<div class="el" style="left:131px;top:822px"></div>
<svg style="left:141px;top:818px" width="14" height="15" viewBox="0 0 14 15"><rect x="3.5" y="1.5" width="7" height="3" rx=".8" fill="#c4c4c8"/><rect x="1" y="5.5" width="10" height="3.4" rx=".8" fill="#c4c4c8"/><rect x="3" y="10" width="8" height="3.2" rx=".8" fill="none" stroke="#c4c4c8" stroke-width="1"/><path d="M14 7.2 l-2.2 -1.4 v2.8z" fill="#c4c4c8"/></svg>
<div class="tt" style="left:160px;top:810px">副轴绕线坐标</div>
<div class="ck" style="top:850px"></div>
<div class="el" style="left:131px;top:852px"></div>
<svg style="left:141px;top:848px" width="14" height="15" viewBox="0 0 14 15"><rect x="3.5" y="1.5" width="7" height="3" rx=".8" fill="#c4c4c8"/><rect x="1" y="5.5" width="10" height="3.4" rx=".8" fill="#c4c4c8"/><rect x="3" y="10" width="8" height="3.2" rx=".8" fill="none" stroke="#c4c4c8" stroke-width="1"/><path d="M14 7.2 l-2.2 -1.4 v2.8z" fill="#c4c4c8"/></svg>
<div class="tt" style="left:160px;top:840px">自动流水坐标</div>
<div class="ck" style="top:880px"></div>
<div class="el" style="left:131px;top:882px"></div>
<svg style="left:141px;top:878px" width="14" height="15" viewBox="0 0 14 15"><rect x="3.5" y="1.5" width="7" height="3" rx=".8" fill="#c4c4c8"/><rect x="1" y="5.5" width="10" height="3.4" rx=".8" fill="#c4c4c8"/><rect x="3" y="10" width="8" height="3.2" rx=".8" fill="none" stroke="#c4c4c8" stroke-width="1"/><path d="M14 7.2 l-2.2 -1.4 v2.8z" fill="#c4c4c8"/></svg>
<div class="tt" style="left:160px;top:870px">升降台模板</div>
<div class="ck" style="top:910px"></div>
<div class="el" style="left:131px;top:912px"></div>
<svg style="left:141px;top:908px" width="14" height="15" viewBox="0 0 14 15"><rect x="3.5" y="1.5" width="7" height="3" rx=".8" fill="#c4c4c8"/><rect x="1" y="5.5" width="10" height="3.4" rx=".8" fill="#c4c4c8"/><rect x="3" y="10" width="8" height="3.2" rx=".8" fill="none" stroke="#c4c4c8" stroke-width="1"/><path d="M14 7.2 l-2.2 -1.4 v2.8z" fill="#c4c4c8"/></svg>
<div class="tt" style="left:160px;top:900px">异常</div>
<div class="ck" style="top:940px"></div>
<div class="el" style="left:77px;top:942px"></div>
<svg style="left:87px;top:938px" width="14" height="15" viewBox="0 0 14 15"><path d="M3.5 1.5 H1 V4 M10.5 1.5 H13 V4 M1 10.5 V13 H3.5 M13 10.5 V13 H10.5" fill="none" stroke="#c4c4c8" stroke-width="1.1"/><rect x="4" y="3" width="6" height="8.5" fill="#c4c4c8"/><path d="M2.5 5 h1.5 M2.5 7.3 h1.5 M2.5 9.6 h1.5 M10 7.3 h1.5" stroke="#c4c4c8" stroke-width="1"/></svg>
<div class="tt" style="left:106px;top:930px">功能</div>
<div class="ck" style="top:970px"></div>
<div class="el" style="left:77px;top:972px"></div>
<svg style="left:87px;top:968px" width="14" height="15" viewBox="0 0 14 15"><path d="M3.5 1.5 H1 V4 M10.5 1.5 H13 V4 M1 10.5 V13 H3.5 M13 10.5 V13 H10.5" fill="none" stroke="#c4c4c8" stroke-width="1.1"/><rect x="3.5" y="3" width="7" height="8.5" fill="#c4c4c8"/><text x="7" y="10.3" font-family="Liberation Sans" font-weight="bold" font-size="7.5" text-anchor="middle" fill="#4a4a4f">B</text></svg>
<div class="tt" style="left:106px;top:960px">功能块</div>
<div class="ck" style="top:1000px"></div>
<div class="ad" style="left:45px;top:1000px"></div>
<svg style="left:60px;top:998px" width="14" height="15" viewBox="0 0 14 15"><rect x="1" y="2" width="12.5" height="10.5" fill="#c4c4c8"/><path d="M1 5.2 h12.5 M1 7.8 h12.5 M1 10.2 h12.5 M5 5 v7.5 M9.4 5 v7.5" stroke="#4a4a4f" stroke-width=".9"/></svg>
<div class="tt" style="left:79px;top:990px">数据</div>
<div class="ck" style="top:1030px"></div>
<div class="el" style="left:77px;top:1032px"></div>
<svg style="left:87px;top:1028px" width="14" height="15" viewBox="0 0 14 15"><path d="M3.5 1.5 H1 V4 M10.5 1.5 H13 V4 M1 10.5 V13 H3.5 M13 10.5 V13 H10.5" fill="none" stroke="#c4c4c8" stroke-width="1.1"/><rect x="3" y="3.5" width="3.5" height="2.5" fill="#c4c4c8"/><rect x="8" y="6.2" width="3.5" height="2.5" fill="#c4c4c8"/><rect x="8" y="9.7" width="3.5" height="2" fill="#c4c4c8"/><path d="M6.5 4.7 h1 v6 h.8 M7.5 7.4 h.5" stroke="#c4c4c8" stroke-width=".8" fill="none"/></svg>
<div class="tt" style="left:106px;top:1020px">数据类型</div>
<div class="trsel" style="top:1051px"></div>
<div class="ck s" style="top:1060px"></div>
<div class="el" style="left:77px;top:1062px"></div>
<svg style="left:87px;top:1058px" width="14" height="15" viewBox="0 0 14 15"><path d="M.8 3.4 V11.4 M13 3.4 V11.4" stroke="#c4d4ea" stroke-width=".9"/><path d="M.4 11.6 H13.4" stroke="#c0d0e6" stroke-width="1"/><text x="6.9" y="9.6" font-family="Liberation Sans" font-weight="bold" font-size="6.6" text-anchor="middle" fill="#cddaf0" textLength="9.6" lengthAdjust="spacingAndGlyphs">var</text></svg>
<div class="tt s" style="left:106px;top:1050px">全局变量</div>
<div class="ck" style="top:1090px"></div>
<div class="ar" style="left:45px;top:1090px"></div>
<svg style="left:60px;top:1088px" width="14" height="15" viewBox="0 0 14 15"><path d="M.6 2.6 h4.2 l1 1.4 h6.6 v9 h-11.8z" fill="#c4c4c8"/><path d="M2.6 6.4 h3.2 v2.2 h-3.2z M7.2 6.4 h3.2 v2.2 h-3.2z M2.6 9.8 h3.2 v2.2 h-3.2z M7.2 9.8 h3.2 v2.2 h-3.2z" fill="#4a4a4f"/></svg>
<div class="tt" style="left:79px;top:1080px">任务</div>
</div>
<div id="lvs"><div class="sbtn" style="top:0"><svg width="25" height="24" viewBox="0 0 25 24"><path d="M6 15 L12.5 8.5 L19 15" fill="none" stroke="#5a5a5e" stroke-width="1.6"/></svg></div><div class="thumb"></div><div class="sbtn" style="top:1002px"><svg width="25" height="24" viewBox="0 0 25 24"><path d="M6 9 L12.5 15.5 L19 9" fill="none" stroke="#5a5a5e" stroke-width="1.6"/></svg></div></div>
<div id="lhs"><div class="hb" style="left:0"><svg width="25" height="26" viewBox="0 0 25 26"><path d="M15 6 L8.5 13 L15 20" fill="none" stroke="#5a5a5e" stroke-width="1.6"/></svg></div><div class="thumb"></div><div class="hb" style="left:271px"><svg width="25" height="26" viewBox="0 0 25 26"><path d="M10 6 L16.5 13 L10 20" fill="none" stroke="#5a5a5e" stroke-width="1.6"/></svg></div></div>
<div id="lpf"><div class="ibox">i</div><span>筛选器</span><div class="pbox"><svg style="left:1px;top:1px" width="18" height="18" viewBox="0 0 18 18"><path d="M10.5 1.5 L16.5 7.5 L14 8 L11 11 L11.5 14 L4 6.5 L7 7 L10 4 Z" fill="#c9c9cb"/><path d="M7.5 10.5 L2 16" stroke="#c9c9cb" stroke-width="1.6"/></svg></div></div>
</div>
<div id="tabs">
<div id="tabtop"></div><div id="tabbg"></div><div id="tabrest"></div><div id="tabline"></div>
<svg style="left:313px;top:104px" width="24" height="24" viewBox="0 0 24 24"><defs><linearGradient id="tg" x1="0" y1="0" x2="0" y2="1"><stop offset="0" stop-color="#d6d6d8"/><stop offset="1" stop-color="#acacaf"/></linearGradient></defs><g stroke="#b4b4b7" stroke-width="2.7"><path d="M4.1 1.5 v21 M9.4 1.5 v21 M14.7 1.5 v21 M20 1.5 v21"/></g><rect x="0.6" y="6" width="23" height="12.4" rx="2" fill="url(#tg)"/></svg>
<div class="tab" style="left:343px">内存设置</div>
<svg style="left:450px;top:104px" width="24" height="24" viewBox="0 0 24 24"><defs><linearGradient id="tg" x1="0" y1="0" x2="0" y2="1"><stop offset="0" stop-color="#d6d6d8"/><stop offset="1" stop-color="#acacaf"/></linearGradient></defs><rect x="0" y="1" width="24" height="21" fill="url(#tg)"/><rect x="0" y="1" width="24" height="21" fill="none" stroke="#d8d8da" stroke-width="1" opacity=".6"/><rect x="6.3" y="5.7" width="14.8" height="12" fill="#4d4e53"/><rect x="8.6" y="10.4" width="11" height="3.4" fill="#c8c8cb"/><path d="M10 12.1 h8.4" stroke="#5a5b60" stroke-width="1" stroke-dasharray="1.6 1"/></svg>
<div class="tab" style="left:479px">选项板设置</div>
<svg style="left:606px;top:104px" width="24" height="24" viewBox="0 0 24 24"><defs><linearGradient id="tg" x1="0" y1="0" x2="0" y2="1"><stop offset="0" stop-color="#d6d6d8"/><stop offset="1" stop-color="#acacaf"/></linearGradient></defs><rect x="0" y="1" width="6.3" height="21" fill="url(#tg)"/><g fill="#b4b4b7"><rect x="8.6" y="1" width="15.6" height="5.8"/><rect x="8.6" y="8.8" width="15.6" height="6.3" fill="#c4c4c7"/><rect x="8.6" y="17" width="15.6" height="5"/></g><g stroke="#808085" stroke-width="1.8" stroke-dasharray="1.5 1.3"><path d="M10 3.9 h13 M10 19.5 h13"/></g></svg>
<div class="tab" style="left:636px">内置<span class="l2">I</span><span class="n">/</span><span class="l2">O</span>设置</div>
<div id="tabact"></div>
<svg style="left:768px;top:104px" width="24" height="24" viewBox="0 0 24 24"><defs><linearGradient id="tg" x1="0" y1="0" x2="0" y2="1"><stop offset="0" stop-color="#d6d6d8"/><stop offset="1" stop-color="#acacaf"/></linearGradient></defs><path d="M0.8 3.5 V19 M23.6 3.5 V19" stroke="#b4c0cf" stroke-width="1.2"/><path d="M0.5 18.6 h23.5" stroke="#b2bdca" stroke-width="1.5"/><text x="12.2" y="16.2" font-family="Liberation Sans" font-weight="bold" font-size="12.5" text-anchor="middle" fill="#adb8c6" textLength="19.5" lengthAdjust="spacingAndGlyphs">var</text></svg>
<div class="tab a" style="left:798px">全局变量</div>
<svg style="left:903px;top:104px" width="24" height="24" viewBox="0 0 24 24"><defs><linearGradient id="tg" x1="0" y1="0" x2="0" y2="1"><stop offset="0" stop-color="#d6d6d8"/><stop offset="1" stop-color="#acacaf"/></linearGradient></defs><path d="M0.6 0.6 h8 l2 2.6 h9.6 v13.8 h-19.6z" fill="url(#tg)"/><circle cx="18.4" cy="16.6" r="5.6" fill="#505156" stroke="#c0c0c3" stroke-width="1.7"/><path d="M18.4 13.2 v3.6 h3" stroke="#c0c0c3" stroke-width="1.4" fill="none"/></svg>
<div class="tab" style="left:934px">任务设置</div>
<svg style="left:1040px;top:104px" width="24" height="24" viewBox="0 0 24 24"><defs><linearGradient id="tg" x1="0" y1="0" x2="0" y2="1"><stop offset="0" stop-color="#d6d6d8"/><stop offset="1" stop-color="#acacaf"/></linearGradient></defs><path d="M3.9 0 v24" stroke="#a2a2a6" stroke-width="2"/><path d="M6.8 1.7 L21.7 8.5 L6.8 15.5 Z" fill="url(#tg)"/></svg>
<div class="tab" style="left:1070px">事件设置</div>
<svg style="left:1177px;top:104px" width="24" height="24" viewBox="0 0 24 24"><defs><linearGradient id="tg" x1="0" y1="0" x2="0" y2="1"><stop offset="0" stop-color="#d6d6d8"/><stop offset="1" stop-color="#acacaf"/></linearGradient></defs><rect x="0" y="0.6" width="20" height="4.8" fill="#bcbcbf"/><g stroke="#b0b0b3" stroke-width="1.5" fill="none"><path d="M0.8 5 V21 H12 M6 5 V21 M11.5 5 V11 M19.2 5 V11"/></g><rect x="13" y="1.6" width="5" height="2" fill="#77787c"/><path d="M12.2 10.8 L24 17 L12.2 23.3 Z" fill="#c4c4c7"/></svg>
<div class="tab" style="left:1207px">操作设置</div>
<svg style="left:1313px;top:104px" width="24" height="24" viewBox="0 0 24 24"><defs><linearGradient id="tg" x1="0" y1="0" x2="0" y2="1"><stop offset="0" stop-color="#d6d6d8"/><stop offset="1" stop-color="#acacaf"/></linearGradient></defs><rect x="3.4" y="2.2" width="13.2" height="5.8" rx="1.6" fill="url(#tg)"/><rect x="1" y="9.6" width="15.6" height="5" rx="1.4" fill="#c6c6c9"/><path d="M4 12.1 h9" stroke="#6a6b70" stroke-width="1"/><rect x="3.6" y="16.2" width="13" height="6" rx="1.6" fill="#a4a4a8"/><rect x="5.4" y="18.2" width="9.4" height="2" rx="1" fill="#c6c6c9"/><path d="M19.6 12.2 l4.2 -2.4 v4.8z" fill="#c6c6c9"/></svg>
<div class="tab" style="left:1343px">开始<span class="n"> - </span><span class="l2">Program</span><span class="n">0</span></div>
<svg style="left:1509px;top:104px" width="24" height="24" viewBox="0 0 24 24"><defs><linearGradient id="tg" x1="0" y1="0" x2="0" y2="1"><stop offset="0" stop-color="#d6d6d8"/><stop offset="1" stop-color="#acacaf"/></linearGradient></defs><rect x="3.4" y="2.2" width="13.2" height="5.8" rx="1.6" fill="url(#tg)"/><rect x="1" y="9.6" width="15.6" height="5" rx="1.4" fill="#c6c6c9"/><path d="M4 12.1 h9" stroke="#6a6b70" stroke-width="1"/><rect x="3.6" y="16.2" width="13" height="6" rx="1.6" fill="#a4a4a8"/><rect x="5.4" y="18.2" width="9.4" height="2" rx="1" fill="#c6c6c9"/><path d="M19.6 12.2 l4.2 -2.4 v4.8z" fill="#c6c6c9"/></svg>
<div class="tab" style="left:1539px">输出<span class="n"> - </span><span class="l2">Program</span><span class="n">0</span></div>
<svg style="left:1705px;top:104px" width="24" height="24" viewBox="0 0 24 24"><defs><linearGradient id="tg" x1="0" y1="0" x2="0" y2="1"><stop offset="0" stop-color="#d6d6d8"/><stop offset="1" stop-color="#acacaf"/></linearGradient></defs><rect x="3.4" y="2.2" width="13.2" height="5.8" rx="1.6" fill="url(#tg)"/><rect x="1" y="9.6" width="15.6" height="5" rx="1.4" fill="#c6c6c9"/><path d="M4 12.1 h9" stroke="#6a6b70" stroke-width="1"/><rect x="3.6" y="16.2" width="13" height="6" rx="1.6" fill="#a4a4a8"/><rect x="5.4" y="18.2" width="9.4" height="2" rx="1" fill="#c6c6c9"/><path d="M19.6 12.2 l4.2 -2.4 v4.8z" fill="#c6c6c9"/></svg>
<div class="tab" style="left:1736px">升降台模板<span class="n"> - </span><span class="l2">Program</span><span class="n">0</span></div>
<svg style="position:absolute;left:879px;top:109px" width="15" height="15" viewBox="0 0 15 15"><path d="M1.5 1.5 L13 13 M13 1.5 L1.5 13" stroke="#fff" stroke-width="2.2" fill="none"/></svg>
<div class="adw" style="left:2212px;top:112px"></div>
</div>
<div id="cgap"></div><div id="cbl1"></div><div id="cbl2"></div><div id="cbr1"></div><div id="cbr2"></div>
<div id="content">
<div class="lbl" style="left:7px;top:8px">组筛选器</div>
<div class="fbtn" style="left:87px;top:7px"><svg style="left:3px;top:4px" width="22" height="22" viewBox="0 0 22 22"><path d="M1.5 1.5 H20.5 L13 10.5 V19 L9 20.5 V10.5 Z" fill="#ececee"/></svg></div>
<div id="combo2"><span>(没有组)</span><div class="cb"><i></i></div></div>
<div id="grid">
<div id="gh"><div class="corner"><i></i></div>
<div class="hc" style="left:45px;width:178px">名称</div>
<div class="hs" style="left:223px"></div>
<div class="hc" style="left:225px;width:178px">数据类型</div>
<div class="hs" style="left:403px"></div>
<div class="hc" style="left:405px;width:148px">初始值</div>
<div class="hs" style="left:553px"></div>
<div class="hc" style="left:555px;width:118px">分配到</div>
<div class="hs" style="left:673px"></div>
<div class="hc" style="left:675px;width:88px">保持</div>
<div class="hs" style="left:763px"></div>
<div class="hc" style="left:765px;width:88px">常量</div>
<div class="hs" style="left:853px"></div>
<div class="hc" style="left:855px;width:178px">网络公开</div>
<div class="hs" style="left:1033px"></div>
<div class="hc" style="left:1035px;width:148px">注释</div>
<div class="hs" style="left:1183px"></div>
</div>
<div class="row" style="top:31px">
<div class="rh"><i></i></div>
<div class="c c1"><span class="l">AY</span>当前位置</div>
<div class="c c2"><span class="l">REAL</span></div>
<div class="c c3"></div>
<div class="c c4"><span class="n">%</span><span class="l">D</span><span class="n">604</span></div>
<div class="c c5"><div class="chk on"><svg style="left:-2px;top:-8px" width="26" height="26" viewBox="0 0 26 26"><path d="M5.2 11.4 L10.9 18.3 L21.2 5" fill="none" stroke="#1c3a96" stroke-width="3" stroke-linejoin="miter"/></svg></div></div>
<div class="c c6"><div class="chk"></div></div>
<div class="c c7">公开<b></b></div>
<div class="c c8"></div><div class="c c9"></div>
</div>
<div class="row" style="top:61px">
<div class="rh"><i></i></div>
<div class="c c1"><span class="l">BY</span>当前位置</div>
<div class="c c2"><span class="l">REAL</span></div>
<div class="c c3"></div>
<div class="c c4"><span class="n">%</span><span class="l">D</span><span class="n">606</span></div>
<div class="c c5"><div class="chk on"><svg style="left:-2px;top:-8px" width="26" height="26" viewBox="0 0 26 26"><path d="M5.2 11.4 L10.9 18.3 L21.2 5" fill="none" stroke="#1c3a96" stroke-width="3" stroke-linejoin="miter"/></svg></div></div>
<div class="c c6"><div class="chk"></div></div>
<div class="c c7">公开<b></b></div>
<div class="c c8"></div><div class="c c9"></div>
</div>
<div class="row" style="top:91px">
<div class="rh"><i></i></div>
<div class="c c1"><span class="l">AZ</span>当前位置</div>
<div class="c c2"><span class="l">REAL</span></div>
<div class="c c3"></div>
<div class="c c4"><span class="n">%</span><span class="l">D</span><span class="n">608</span></div>
<div class="c c5"><div class="chk on"><svg style="left:-2px;top:-8px" width="26" height="26" viewBox="0 0 26 26"><path d="M5.2 11.4 L10.9 18.3 L21.2 5" fill="none" stroke="#1c3a96" stroke-width="3" stroke-linejoin="miter"/></svg></div></div>
<div class="c c6"><div class="chk"></div></div>
<div class="c c7">公开<b></b></div>
<div class="c c8"></div><div class="c c9"></div>
</div>
<div class="row" style="top:121px">
<div class="rh"><i></i></div>
<div class="c c1"><span class="l">BZ</span>当前位置</div>
<div class="c c2"><span class="l">REAL</span></div>
<div class="c c3"></div>
<div class="c c4"><span class="n">%</span><span class="l">D</span><span class="n">610</span></div>
<div class="c c5"><div class="chk on"><svg style="left:-2px;top:-8px" width="26" height="26" viewBox="0 0 26 26"><path d="M5.2 11.4 L10.9 18.3 L21.2 5" fill="none" stroke="#1c3a96" stroke-width="3" stroke-linejoin="miter"/></svg></div></div>
<div class="c c6"><div class="chk"></div></div>
<div class="c c7">公开<b></b></div>
<div class="c c8"></div><div class="c c9"></div>
</div>
<div class="row" style="top:151px">
<div class="rh"><i></i></div>
<div class="c c1"><span class="l">AU</span>当前位置</div>
<div class="c c2"><span class="l">REAL</span></div>
<div class="c c3"></div>
<div class="c c4"><span class="n">%</span><span class="l">D</span><span class="n">612</span></div>
<div class="c c5"><div class="chk on"><svg style="left:-2px;top:-8px" width="26" height="26" viewBox="0 0 26 26"><path d="M5.2 11.4 L10.9 18.3 L21.2 5" fill="none" stroke="#1c3a96" stroke-width="3" stroke-linejoin="miter"/></svg></div></div>
<div class="c c6"><div class="chk"></div></div>
<div class="c c7">公开<b></b></div>
<div class="c c8"></div><div class="c c9"></div>
</div>
<div class="row" style="top:181px">
<div class="rh"><i></i></div>
<div class="c c1"><span class="l">BU</span>当前位置</div>
<div class="c c2"><span class="l">REAL</span></div>
<div class="c c3"></div>
<div class="c c4"><span class="n">%</span><span class="l">D</span><span class="n">614</span></div>
<div class="c c5"><div class="chk on"><svg style="left:-2px;top:-8px" width="26" height="26" viewBox="0 0 26 26"><path d="M5.2 11.4 L10.9 18.3 L21.2 5" fill="none" stroke="#1c3a96" stroke-width="3" stroke-linejoin="miter"/></svg></div></div>
<div class="c c6"><div class="chk"></div></div>
<div class="c c7">公开<b></b></div>
<div class="c c8"></div><div class="c c9"></div>
</div>
<div class="row" style="top:211px">
<div class="rh"><i></i></div>
<div class="c c1">全部原点完成</div>
<div class="c c2"><span class="l">BOOL</span></div>
<div class="c c3"></div>
<div class="c c4"><span class="n">%</span><span class="l">W</span><span class="n">0.07</span></div>
<div class="c c5"><div class="chk"></div></div>
<div class="c c6"><div class="chk"></div></div>
<div class="c c7">公开<b></b></div>
<div class="c c8"></div><div class="c c9"></div>
</div>
<div class="row" style="top:241px">
<div class="rh"><i></i></div>
<div class="c c1"><span class="l">HMI</span>加热</div>
<div class="c c2"><span class="l">BOOL</span></div>
<div class="c c3"></div>
<div class="c c4"><span class="n">%</span><span class="l">W</span><span class="n">0.08</span></div>
<div class="c c5"><div class="chk"></div></div>
<div class="c c6"><div class="chk"></div></div>
<div class="c c7">公开<b></b></div>
<div class="c c8"></div><div class="c c9"></div>
</div>
<div class="row" style="top:271px">
<div class="rh"><i></i></div>
<div class="c c1"><span class="l">HMI</span>启动</div>
<div class="c c2"><span class="l">BOOL</span></div>
<div class="c c3"></div>
<div class="c c4"><span class="n">%</span><span class="l">W</span><span class="n">0.11</span></div>
<div class="c c5"><div class="chk"></div></div>
<div class="c c6"><div class="chk"></div></div>
<div class="c c7">公开<b></b></div>
<div class="c c8"></div><div class="c c9"></div>
</div>
<div class="row" style="top:301px">
<div class="rh"><i></i></div>
<div class="c c1"><span class="l">HMI</span>暂停</div>
<div class="c c2"><span class="l">BOOL</span></div>
<div class="c c3"></div>
<div class="c c4"><span class="n">%</span><span class="l">W</span><span class="n">0.12</span></div>
<div class="c c5"><div class="chk"></div></div>
<div class="c c6"><div class="chk"></div></div>
<div class="c c7">公开<b></b></div>
<div class="c c8"></div><div class="c c9"></div>
</div>
<div class="row" style="top:331px">
<div class="rh"><i></i></div>
<div class="c c1"><span class="l">HMI</span>复位</div>
<div class="c c2"><span class="l">BOOL</span></div>
<div class="c c3"></div>
<div class="c c4"><span class="n">%</span><span class="l">W</span><span class="n">0.13</span></div>
<div class="c c5"><div class="chk"></div></div>
<div class="c c6"><div class="chk"></div></div>
<div class="c c7">公开<b></b></div>
<div class="c c8"></div><div class="c c9"></div>
</div>
<div class="row" style="top:361px">
<div class="rh"><i></i></div>
<div class="c c1">加热开关</div>
<div class="c c2"><span class="l">BOOL</span></div>
<div class="c c3"></div>
<div class="c c4"><span class="n">%</span><span class="l">W</span><span class="n">0.14</span></div>
<div class="c c5"><div class="chk"></div></div>
<div class="c c6"><div class="chk"></div></div>
<div class="c c7">公开<b></b></div>
<div class="c c8"></div><div class="c c9"></div>
</div>
<div class="row" style="top:391px">
<div class="rh"><i></i></div>
<div class="c c1"><span class="l">HMI</span>暂停指示</div>
<div class="c c2"><span class="l">BOOL</span></div>
<div class="c c3"></div>
<div class="c c4"><span class="n">%</span><span class="l">W</span><span class="n">0.15</span></div>
<div class="c c5"><div class="chk"></div></div>
<div class="c c6"><div class="chk"></div></div>
<div class="c c7">公开<b></b></div>
<div class="c c8"></div><div class="c c9"></div>
</div>
<div class="row" style="top:421px">
<div class="rh"><i></i></div>
<div class="c c1">生产计数</div>
<div class="c c2"><span class="l">UINT</span></div>
<div class="c c3"></div>
<div class="c c4"></div>
<div class="c c5"><div class="chk on"><svg style="left:-2px;top:-8px" width="26" height="26" viewBox="0 0 26 26"><path d="M5.2 11.4 L10.9 18.3 L21.2 5" fill="none" stroke="#1c3a96" stroke-width="3" stroke-linejoin="miter"/></svg></div></div>
<div class="c c6"><div class="chk"></div></div>
<div class="c c7">公开<b></b></div>
<div class="c c8"></div><div class="c c9"></div>
</div>
<div class="row" style="top:451px">
<div class="rh"><i></i></div>
<div class="c c1">零</div>
<div class="c c2"><span class="l">INT</span></div>
<div class="c c3"><span class="n">0</span></div>
<div class="c c4"></div>
<div class="c c5"><div class="chk on"><svg style="left:-2px;top:-8px" width="26" height="26" viewBox="0 0 26 26"><path d="M5.2 11.4 L10.9 18.3 L21.2 5" fill="none" stroke="#1c3a96" stroke-width="3" stroke-linejoin="miter"/></svg></div></div>
<div class="c c6"><div class="chk"></div></div>
<div class="c c7">不公开<b></b></div>
<div class="c c8"></div><div class="c c9"></div>
</div>
<div class="row" style="top:481px">
<div class="rh"><i></i></div>
<div class="c c1">产品清零</div>
<div class="c c2"><span class="l">BOOL</span></div>
<div class="c c3"></div>
<div class="c c4"><span class="n">%</span><span class="l">W</span><span class="n">10.00</span></div>
<div class="c c5"><div class="chk"></div></div>
<div class="c c6"><div class="chk"></div></div>
<div class="c c7">公开<b></b></div>
<div class="c c8"></div><div class="c c9"></div>
</div>
<div class="row" style="top:511px">
<div class="rh"><i></i></div>
<div class="c c1">密码</div>
<div class="c c2"><span class="l">INT</span></div>
<div class="c c3"><span class="n">1314</span></div>
<div class="c c4"></div>
<div class="c c5"><div class="chk on"><svg style="left:-2px;top:-8px" width="26" height="26" viewBox="0 0 26 26"><path d="M5.2 11.4 L10.9 18.3 L21.2 5" fill="none" stroke="#1c3a96" stroke-width="3" stroke-linejoin="miter"/></svg></div></div>
<div class="c c6"><div class="chk"></div></div>
<div class="c c7">公开<b></b></div>
<div class="c c8"></div><div class="c c9"></div>
</div>
<div class="row" style="top:541px">
<div class="rh"><i></i></div>
<div class="c c1">密码地址</div>
<div class="c c2"><span class="l">INT</span></div>
<div class="c c3"></div>
<div class="c c4"><span class="n">%</span><span class="l">D</span><span class="n">3004</span></div>
<div class="c c5"><div class="chk on"><svg style="left:-2px;top:-8px" width="26" height="26" viewBox="0 0 26 26"><path d="M5.2 11.4 L10.9 18.3 L21.2 5" fill="none" stroke="#1c3a96" stroke-width="3" stroke-linejoin="miter"/></svg></div></div>
<div class="c c6"><div class="chk"></div></div>
<div class="c c7">公开<b></b></div>
<div class="c c8"></div><div class="c c9"></div>
</div>
<div class="row" style="top:571px">
<div class="rh"><i></i></div>
<div class="c c1">屏页面</div>
<div class="c c2"><span class="l">INT</span></div>
<div class="c c3"><span class="n">25</span></div>
<div class="c c4"></div>
<div class="c c5"><div class="chk"></div></div>
<div class="c c6"><div class="chk"></div></div>
<div class="c c7">公开<b></b></div>
<div class="c c8"></div><div class="c c9"></div>
</div>
<div class="row" style="top:601px">
<div class="rh"><i></i></div>
<div class="c c1">屏地址</div>
<div class="c c2"><span class="l">INT</span></div>
<div class="c c3"></div>
<div class="c c4"><span class="n">%</span><span class="l">D</span><span class="n">3000</span></div>
<div class="c c5"><div class="chk on"><svg style="left:-2px;top:-8px" width="26" height="26" viewBox="0 0 26 26"><path d="M5.2 11.4 L10.9 18.3 L21.2 5" fill="none" stroke="#1c3a96" stroke-width="3" stroke-linejoin="miter"/></svg></div></div>
<div class="c c6"><div class="chk"></div></div>
<div class="c c7">公开<b></b></div>
<div class="c c8"></div><div class="c c9"></div>
</div>
<div class="row" style="top:631px">
<div class="rh"><i></i></div>
<div class="c c1">插补高度<span class="n">1</span></div>
<div class="c c2"><span class="l">REAL</span></div>
<div class="c c3"></div>
<div class="c c4"><span class="n">%</span><span class="l">D</span><span class="n">714</span></div>
<div class="c c5"><div class="chk on"><svg style="left:-2px;top:-8px" width="26" height="26" viewBox="0 0 26 26"><path d="M5.2 11.4 L10.9 18.3 L21.2 5" fill="none" stroke="#1c3a96" stroke-width="3" stroke-linejoin="miter"/></svg></div></div>
<div class="c c6"><div class="chk"></div></div>
<div class="c c7">公开<b></b></div>
<div class="c c8"></div><div class="c c9"></div>
</div>
<div class="row" style="top:661px">
<div class="rh"><i></i></div>
<div class="c c1">插补高度<span class="n">2</span></div>
<div class="c c2"><span class="l">REAL</span></div>
<div class="c c3"></div>
<div class="c c4"><span class="n">%</span><span class="l">D</span><span class="n">716</span></div>
<div class="c c5"><div class="chk on"><svg style="left:-2px;top:-8px" width="26" height="26" viewBox="0 0 26 26"><path d="M5.2 11.4 L10.9 18.3 L21.2 5" fill="none" stroke="#1c3a96" stroke-width="3" stroke-linejoin="miter"/></svg></div></div>
<div class="c c6"><div class="chk"></div></div>
<div class="c c7">公开<b></b></div>
<div class="c c8"></div><div class="c c9"></div>
</div>
<div class="row" style="top:691px">
<div class="rh"><i></i></div>
<div class="c c1">插补高度<span class="n">3</span></div>
<div class="c c2"><span class="l">REAL</span></div>
<div class="c c3"></div>
<div class="c c4"><span class="n">%</span><span class="l">D</span><span class="n">718</span></div>
<div class="c c5"><div class="chk on"><svg style="left:-2px;top:-8px" width="26" height="26" viewBox="0 0 26 26"><path d="M5.2 11.4 L10.9 18.3 L21.2 5" fill="none" stroke="#1c3a96" stroke-width="3" stroke-linejoin="miter"/></svg></div></div>
<div class="c c6"><div class="chk"></div></div>
<div class="c c7">公开<b></b></div>
<div class="c c8"></div><div class="c c9"></div>
</div>
<div class="row sel" style="top:721px">
<div class="rh"><i></i></div>
<div class="c c1">插补高度<span class="n">4</span></div>
<div class="c c2"><span class="l">REAL</span></div>
<div class="c c3"></div>
<div class="c c4"><span class="n">%</span><span class="l">D</span><span class="n">720</span></div>
<div class="c c5"><div class="chk on"><svg style="left:-2px;top:-8px" width="26" height="26" viewBox="0 0 26 26"><path d="M5.2 11.4 L10.9 18.3 L21.2 5" fill="none" stroke="#1c3a96" stroke-width="3" stroke-linejoin="miter"/></svg></div></div>
<div class="c c6"><div class="chk"></div></div>
<div class="c c7">公开<b></b></div>
<div class="c c8"></div><div class="c c9"></div>
</div>
<div class="row" style="top:751px">
<div class="rh"><i></i></div>
<div class="c c1">插补高度<span class="n">5</span></div>
<div class="c c2"><span class="l">REAL</span></div>
<div class="c c3"></div>
<div class="c c4"><span class="n">%</span><span class="l">D</span><span class="n">1108</span></div>
<div class="c c5"><div class="chk on"><svg style="left:-2px;top:-8px" width="26" height="26" viewBox="0 0 26 26"><path d="M5.2 11.4 L10.9 18.3 L21.2 5" fill="none" stroke="#1c3a96" stroke-width="3" stroke-linejoin="miter"/></svg></div></div>
<div class="c c6"><div class="chk"></div></div>
<div class="c c7">公开<b></b></div>
<div class="c c8"></div><div class="c c9"></div>
</div>
<div class="row" style="top:781px">
<div class="rh"><i></i></div>
<div class="c c1">插补高度<span class="n">6</span></div>
<div class="c c2"><span class="l">REAL</span></div>
<div class="c c3"></div>
<div class="c c4"><span class="n">%</span><span class="l">D</span><span class="n">1110</span></div>
<div class="c c5"><div class="chk on"><svg style="left:-2px;top:-8px" width="26" height="26" viewBox="0 0 26 26"><path d="M5.2 11.4 L10.9 18.3 L21.2 5" fill="none" stroke="#1c3a96" stroke-width="3" stroke-linejoin="miter"/></svg></div></div>
<div class="c c6"><div class="chk"></div></div>
<div class="c c7">公开<b></b></div>
<div class="c c8"></div><div class="c c9"></div>
</div>
<div class="row" style="top:811px">
<div class="rh"><i></i></div>
<div class="c c1">插补高度<span class="n">7</span></div>
<div class="c c2"><span class="l">REAL</span></div>
<div class="c c3"></div>
<div class="c c4"><span class="n">%</span><span class="l">D</span><span class="n">1112</span></div>
<div class="c c5"><div class="chk on"><svg style="left:-2px;top:-8px" width="26" height="26" viewBox="0 0 26 26"><path d="M5.2 11.4 L10.9 18.3 L21.2 5" fill="none" stroke="#1c3a96" stroke-width="3" stroke-linejoin="miter"/></svg></div></div>
<div class="c c6"><div class="chk"></div></div>
<div class="c c7">公开<b></b></div>
<div class="c c8"></div><div class="c c9"></div>
</div>
<div class="row" style="top:841px">
<div class="rh"><i></i></div>
<div class="c c1">插补高度<span class="n">8</span></div>
<div class="c c2"><span class="l">REAL</span></div>
<div class="c c3"></div>
<div class="c c4"><span class="n">%</span><span class="l">D</span><span class="n">1114</span></div>
<div class="c c5"><div class="chk on"><svg style="left:-2px;top:-8px" width="26" height="26" viewBox="0 0 26 26"><path d="M5.2 11.4 L10.9 18.3 L21.2 5" fill="none" stroke="#1c3a96" stroke-width="3" stroke-linejoin="miter"/></svg></div></div>
<div class="c c6"><div class="chk"></div></div>
<div class="c c7">不公开<b></b></div>
<div class="c c8"></div><div class="c c9"></div>
</div>
<div class="row" style="top:871px">
<div class="rh"><i></i></div>
<div class="c c1">自动台运转</div>
<div class="c c2"><span class="l">BOOL</span></div>
<div class="c c3"></div>
<div class="c c4"></div>
<div class="c c5"><div class="chk"></div></div>
<div class="c c6"><div class="chk"></div></div>
<div class="c c7">不公开<b></b></div>
<div class="c c8"></div><div class="c c9"></div>
</div>
<div class="row" style="top:901px">
<div class="rh"><i></i></div>
<div class="c c1"><span class="hl"></span><span>自动台动作</span></div>
<div class="c c2"><span class="l">BOOL</span></div>
<div class="c c3"></div>
<div class="c c4"></div>
<div class="c c5"><div class="chk"></div></div>
<div class="c c6"><div class="chk"></div></div>
<div class="c c7">不公开<b></b></div>
<div class="c c8"></div><div class="c c9"></div>
</div>
<div class="row" style="top:931px">
<div class="rh"><i></i></div>
<div class="c c1">自动台正反转</div>
<div class="c c2"><span class="l">BOOL</span></div>
<div class="c c3"></div>
<div class="c c4"></div>
<div class="c c5"><div class="chk"></div></div>
<div class="c c6"><div class="chk"></div></div>
<div class="c c7">不公开<b></b></div>
<div class="c c8"></div><div class="c c9"></div>
</div>
<div class="row" style="top:961px">
<div class="rh"><i></i></div>
<div class="c c1">自动台原位</div>
<div class="c c2"><span class="l">BOOL</span></div>
<div class="c c3"></div>
<div class="c c4"></div>
<div class="c c5"><div class="chk"></div></div>
<div class="c c6"><div class="chk"></div></div>
<div class="c c7">不公开<b></b></div>
<div class="c c8"></div><div class="c c9"></div>
</div>
<div class="row" style="top:991px">
<div class="rh"><i></i></div>
<div class="c c1">时间清零</div>
<div class="c c2"><span class="l">BOOL</span></div>
<div class="c c3"></div>
<div class="c c4"><span class="n">%</span><span class="l">W</span><span class="n">10.15</span></div>
<div class="c c5"><div class="chk"></div></div>
<div class="c c6"><div class="chk"></div></div>
<div class="c c7">公开<b></b></div>
<div class="c c8"></div><div class="c c9"></div>
</div>
<div class="row" style="top:1021px">
<div class="rh"><i></i></div>
<div class="c c1">总时计</div>
<div class="c c2"><span class="l">ULINT</span></div>
<div class="c c3"></div>
<div class="c c4"><span class="n">%</span><span class="l">D</span><span class="n">3110</span></div>
<div class="c c5"><div class="chk on"><svg style="left:-2px;top:-8px" width="26" height="26" viewBox="0 0 26 26"><path d="M5.2 11.4 L10.9 18.3 L21.2 5" fill="none" stroke="#1c3a96" stroke-width="3" stroke-linejoin="miter"/></svg></div></div>
<div class="c c6"><div class="chk"></div></div>
<div class="c c7">公开<b></b></div>
<div class="c c8"></div><div class="c c9"></div>
</div>
<div class="row" style="top:1051px">
<div class="rh"><i></i></div>
<div class="c c1">异常<span class="n">7</span></div>
<div class="c c2"><span class="l">BOOL</span></div>
<div class="c c3"></div>
<div class="c c4"><span class="n">%</span><span class="l">W</span><span class="n">12.06</span></div>
<div class="c c5"><div class="chk"></div></div>
<div class="c c6"><div class="chk"></div></div>
<div class="c c7">公开<b></b></div>
<div class="c c8"></div><div class="c c9"></div>
</div>
<div class="row" style="top:1081px">
<div class="rh"><i></i></div>
<div class="c c1">异常<span class="n">8</span></div>
<div class="c c2"><span class="l">BOOL</span></div>
<div class="c c3"></div>
<div class="c c4"><span class="n">%</span><span class="l">W</span><span class="n">12.07</span></div>
<div class="c c5"><div class="chk"></div></div>
<div class="c c6"><div class="chk"></div></div>
<div class="c c7">公开<b></b></div>
<div class="c c8"></div><div class="c c9"></div>
</div>
<div class="vl" style="left:223px"></div>
<div class="vl" style="left:403px"></div>
<div class="vl" style="left:553px"></div>
<div class="vl" style="left:673px"></div>
<div class="vl" style="left:763px"></div>
<div class="vl" style="left:853px"></div>
<div class="vl" style="left:1033px"></div>
<div class="vl" style="left:1183px"></div>
<div id="gvs"><div class="sbtn" style="top:0"><svg width="24" height="24" viewBox="0 0 24 24"><path d="M5.5 15 L12 8.5 L18.5 15" fill="none" stroke="#5a5a5e" stroke-width="1.6"/></svg></div><div class="thumb"></div><div class="sbtn" style="top:1026px;height:26px"><svg width="24" height="24" viewBox="0 0 24 24"><path d="M5.5 9 L12 15.5 L18.5 9" fill="none" stroke="#5a5a5e" stroke-width="1.6"/></svg></div></div>
</div>
</div>
<svg id="red" width="2301" height="1267" viewBox="0 0 2301 1267"><g fill="none" stroke="#e5191c" stroke-width="5.7" stroke-linecap="round" stroke-linejoin="round">
<path d="M914.5 203.3 C905 203.5 890 205 882 207 C877 208.5 872 212 868.2 215.3 C863 220 858 224.5 854.3 229.1 C850 235 846.5 241 844.2 246.8 C841.5 254 839.8 261 839.1 268.3 C838.5 275 838.5 282 839.1 288.5 C839.8 295.5 841.5 302 844.2 307.4 C846.8 313 850.2 318 854.3 322.6 C858.8 327 864.5 330.4 870.7 332.7 C877 335.2 884 336.7 890.9 337.1 C897.6 337.5 904.5 337.3 911.1 336.5 C918.6 335.6 926 334 932.6 331.4 C939.6 328.6 946 324.9 951.5 320.1 C956.2 315.6 959.8 310 962.2 303.6 C964.3 298 965.4 292 965.4 286 C965.4 280.6 964.2 275.4 962.2 270.8 C960.5 266.4 958.1 262.2 955.3 258.2 C951.5 253.3 947 248.6 942.7 244.3 C938.8 240.1 935 235.8 931.3 231.7 C927.7 227.8 924 223.8 919.9 220.3 C916.6 217.7 912.8 215.7 908.6 214.6 C903.7 213.5 898.5 213.3 893.4 213.4"/>
<path d="M892.5 461 C900 461 908 461.6 916.3 462.1 C924 462.7 932 463.5 939 465.3 C944.5 467 949.8 469.5 954.1 472.8 C959.2 476.3 963.6 480.6 966.8 485.5 C970.4 490.8 972.8 496.8 973.7 503.1 C974.5 509 973.7 515 971.8 520.8 C969.9 527 967.3 533 964.2 538.5 C961.4 543.8 958.2 549 954.1 553.6 C950 557.3 944.8 559.9 939 561.2 C931.8 563.3 924 564.5 916.3 565 C908.8 565.5 901 565.5 893.5 565 C885.6 564.2 878 562.4 870.8 560 C862.9 557.4 855.2 553.9 848.1 549.8 C841.3 546.1 834.8 542 829.1 537.2 C824 532.3 819.7 526.8 816.5 520.8 C813.5 515.2 811.3 509.2 810.2 503.1 C809.6 498.8 809.6 494.3 810.8 490.5 C812.3 487 815.3 484.5 819 482.9 C825.8 480.2 833 478.4 840.5 476.6 C848.8 474.4 857.3 472.4 865.8 470.3 C872.5 468.7 879.3 467 886 465.9 C891.8 464.8 897.7 464.2 903.6 464 C912 463.8 920.5 463.9 928.9 464.6 C932.8 465.2 936.7 466.6 940.3 468.4"/>
<path d="M893 462.5 L915 463.2" stroke-width="7"/>
</g></svg>
<div id="rp"><div id="rph"><span>查找和替换</span></div>
<div class="rl" style="top:36px">查找内容</div>
<div class="rl" style="top:70px">替换为</div>
<div class="rl" style="top:102px">查找范围</div>
<div class="rl" style="top:134px">查找对象</div>
<div class="rl" style="top:165px">使用</div>
<div id="rgb"></div><div class="rl" style="left:13px;top:199px;background:#4b4b50;padding:0 2px">查找选项</div>
<div class="rchk" style="top:225px;background:#e4e4e4"></div><div class="rl" style="left:36px;top:223px">区分大小写</div>
<div class="rchk" style="top:251px;background:#7fb3ee"><svg style="left:-2px;top:-8px" width="26" height="26" viewBox="0 0 26 26"><path d="M5.2 11.4 L10.9 18.3 L21.2 5" fill="none" stroke="#1c3a96" stroke-width="3" stroke-linejoin="miter"/></svg></div><div class="rl" style="left:36px;top:250px">全字匹配</div>
<div class="rchk" style="top:278px;background:#8a8a8c;border-color:#6c6c70"></div><div class="rl" style="left:36px;top:277px;color:#9a9a9e">反转</div>
<div class="rbtn" style="top:325px"><span>搜索全部</span></div><div class="rbtn" style="top:428px"></div>
<div id="rpf"><span>工具箱</span></div>
</div>
</body></html>
